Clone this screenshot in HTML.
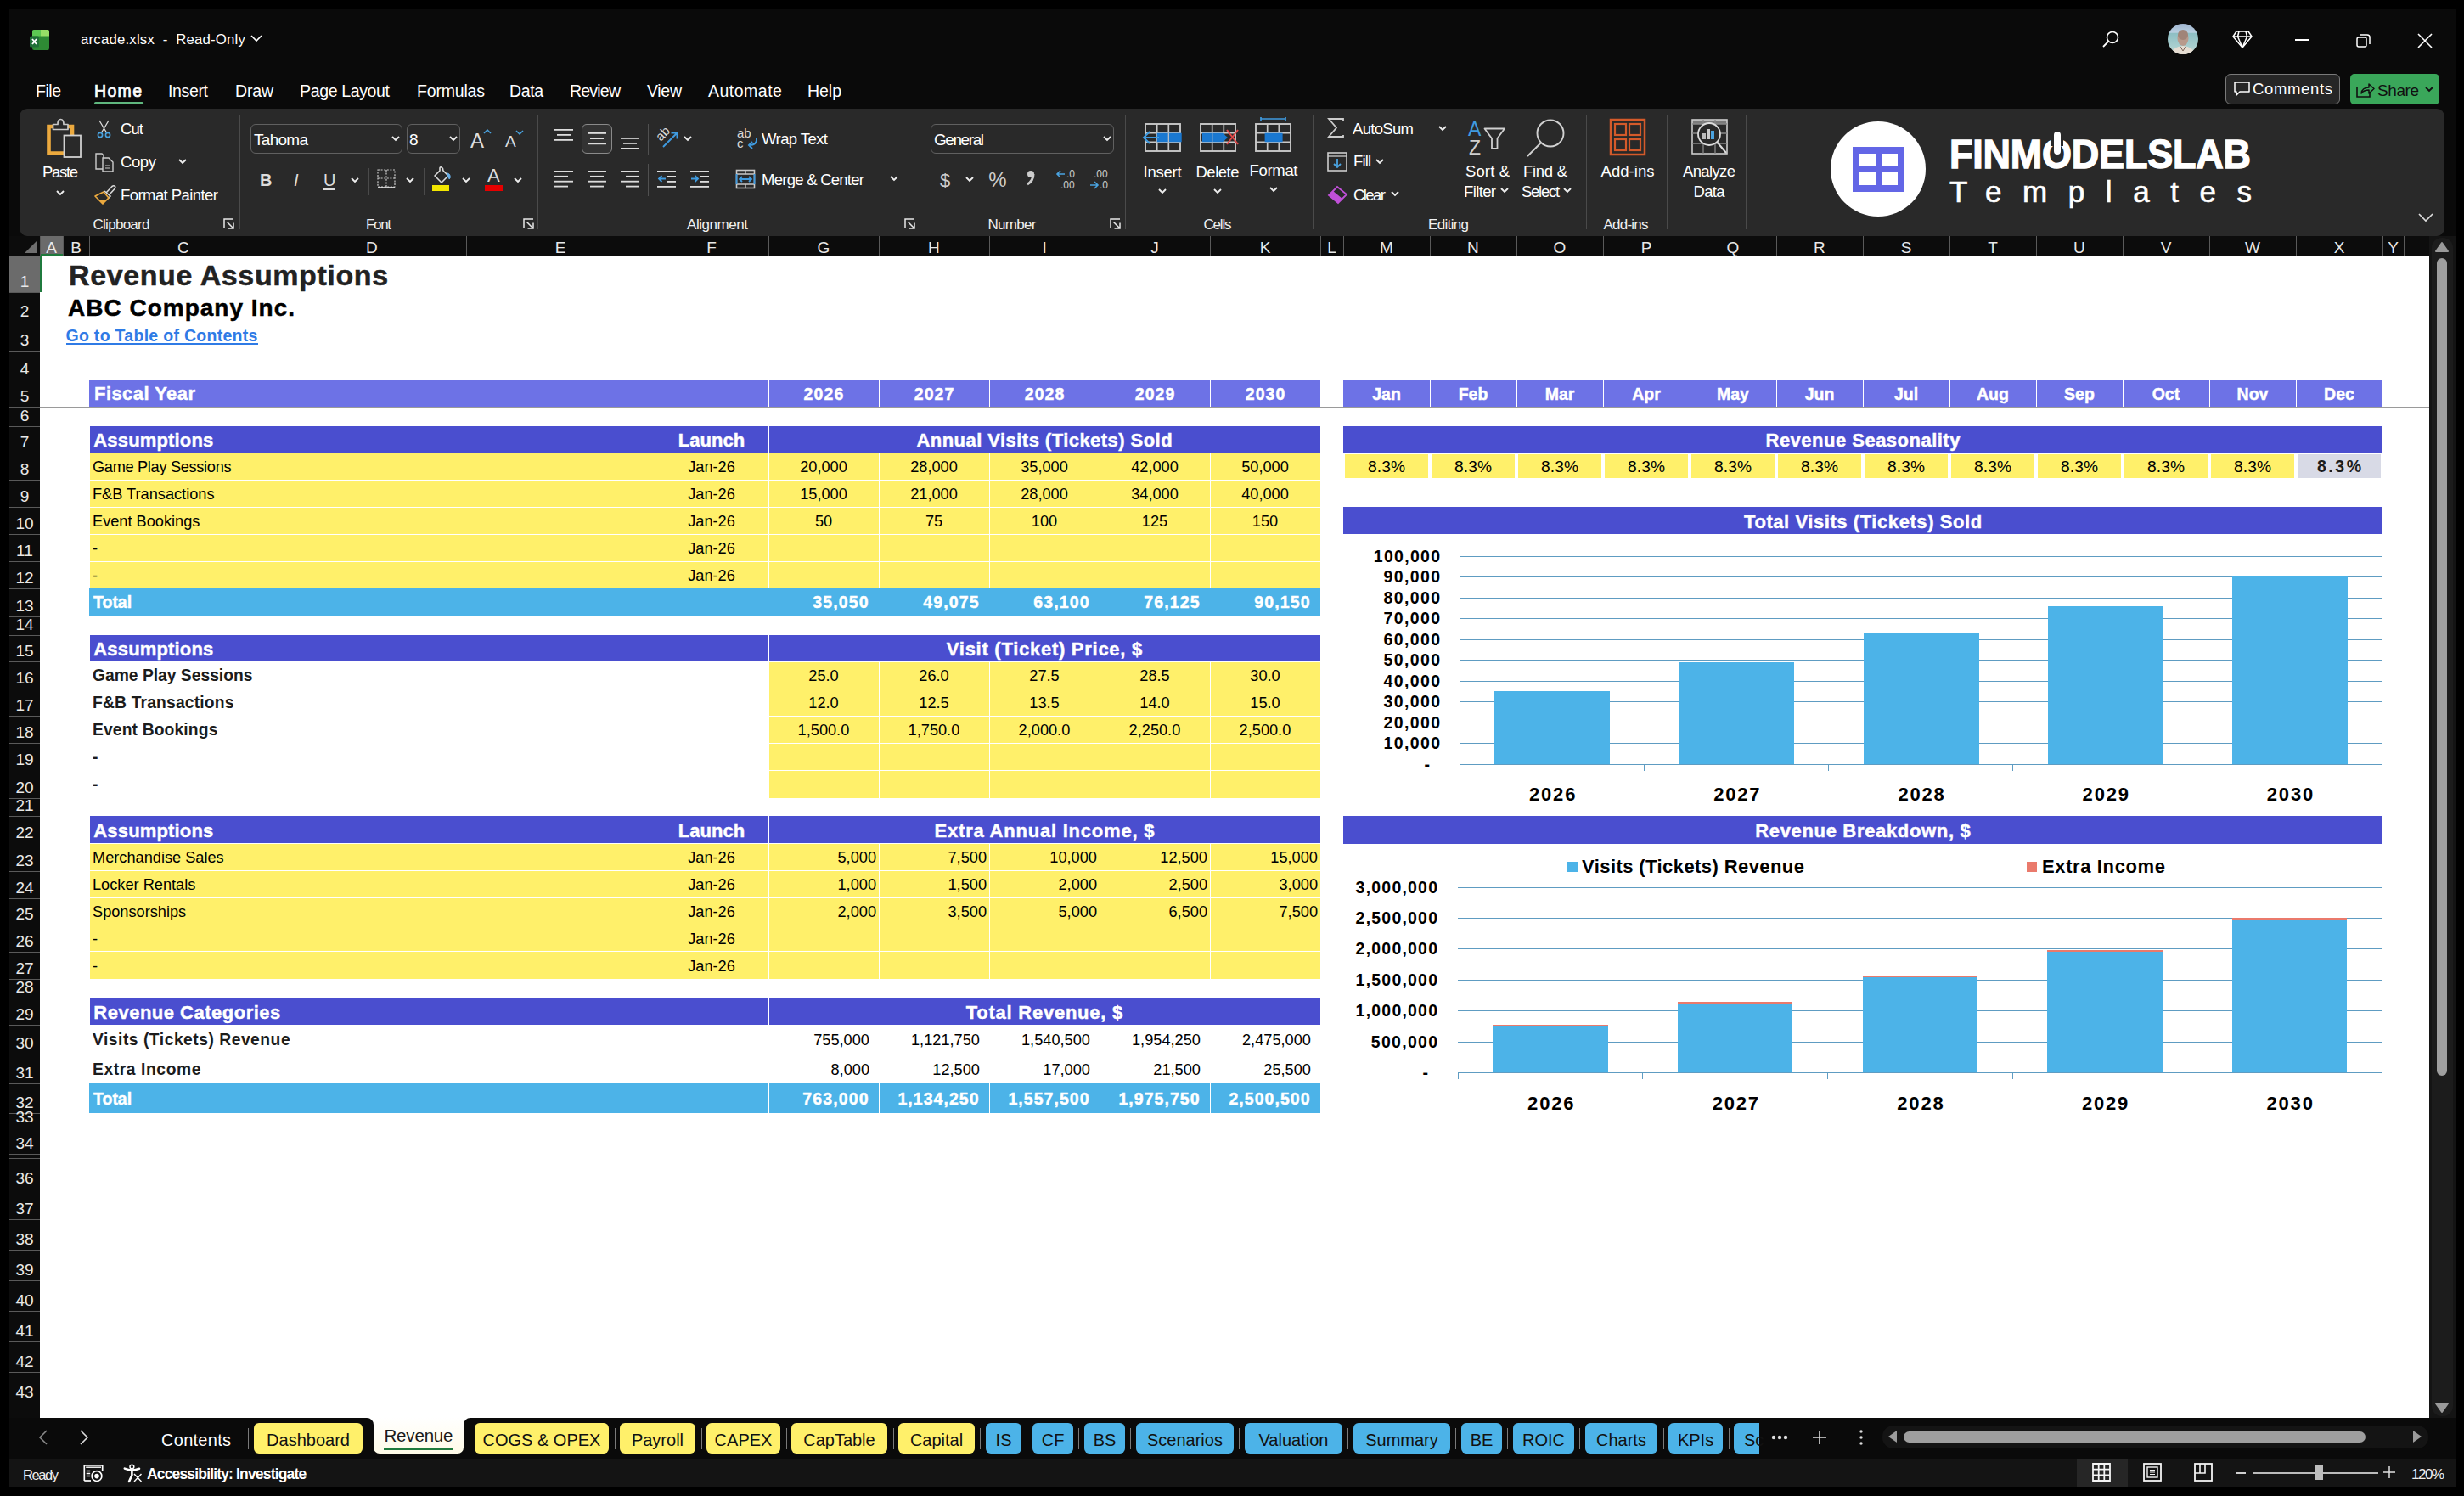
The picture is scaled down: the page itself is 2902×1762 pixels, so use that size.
<!DOCTYPE html>
<html><head><meta charset="utf-8"><style>
html,body{margin:0;padding:0;background:#000;width:2902px;height:1762px;overflow:hidden;}
body{position:relative;font-family:"Liberation Sans",sans-serif;}
.t{position:absolute;white-space:pre;line-height:1;}
.r{position:absolute;box-sizing:border-box;}
.s{position:absolute;overflow:visible;}
</style></head><body>
<div class="r" style="left:11.0px;top:11.0px;width:2881.0px;height:1740.0px;background:#0a0a0a;"></div>
<svg class="s" style="left:35px;top:35px" width="23" height="24" viewBox="0 0 23 24">
<rect x="3" y="0" width="20" height="24" rx="2.2" fill="#2e8a34"/>
<path d="M3 2.2 Q3 0 5.2 0 H13 V7.5 H3 Z" fill="#5cc752"/>
<path d="M13 0 H20.8 Q23 0 23 2.2 V7.5 H13 Z" fill="#97df66"/>
<rect x="0" y="7.5" width="11" height="13" rx="1.6" fill="#1f6f36"/>
<path d="M3 11 L8 17 M8 11 L3 17" stroke="#fff" stroke-width="1.9"/>
</svg>
<div class="t" style="left:95.0px;top:39.3px;font-size:16.8px;color:#fff;letter-spacing:0.19px;">arcade.xlsx  -  Read-Only</div>
<svg class="s" style="left:295px;top:40px" width="14" height="10" viewBox="0 0 14 10"><path d="M1 2 L7 8 L13 2" stroke="#fff" stroke-width="1.6" fill="none"/></svg>
<svg class="s" style="left:2474px;top:34px" width="24" height="24" viewBox="0 0 24 24"><circle cx="14" cy="10" r="6.5" stroke="#fff" stroke-width="1.6" fill="none"/><path d="M9.5 14.5 L3 21" stroke="#fff" stroke-width="1.8"/></svg>
<svg class="s" style="left:2553px;top:28px" width="36" height="36" viewBox="0 0 36 36"><defs><clipPath id="av"><circle cx="18" cy="18" r="18"/></clipPath>
<linearGradient id="avg" x1="0" y1="0" x2="0" y2="1"><stop offset="0" stop-color="#9fb4cf"/><stop offset=".28" stop-color="#b9cfe0"/><stop offset=".32" stop-color="#8ebfc4"/><stop offset=".75" stop-color="#a9cfcf"/><stop offset="1" stop-color="#d9dcd8"/></linearGradient></defs>
<g clip-path="url(#av)"><rect width="36" height="36" fill="url(#avg)"/>
<ellipse cx="18" cy="17" rx="6.5" ry="9" fill="#b89a8c"/><ellipse cx="18" cy="13" rx="6" ry="6" fill="#a08478"/>
<path d="M4 36 Q6 27 18 26 Q30 27 32 36 Z" fill="#e6ddd2"/><path d="M15 27 L18 32 L21 27" stroke="#7a6458" stroke-width="1" fill="none"/></g></svg>
<svg class="s" style="left:2628px;top:34px" width="26" height="24" viewBox="0 0 26 24"><path d="M6 3 H20 L24 9 L13 22 L2 9 Z M2 9 H24 M9 3 L7.5 9 L13 22 L18.5 9 L17 3" stroke="#fff" stroke-width="1.5" fill="none" stroke-linejoin="round"/></svg>
<div class="r" style="left:2703.0px;top:46.0px;width:16.0px;height:2.0px;background:#fff;"></div>
<svg class="s" style="left:2774px;top:38px" width="20" height="20" viewBox="0 0 20 20"><rect x="2" y="6" width="11" height="11" rx="2" stroke="#fff" stroke-width="1.5" fill="none"/><path d="M6 3 H14 Q17 3 17 6 V14" stroke="#fff" stroke-width="1.5" fill="none"/></svg>
<svg class="s" style="left:2846px;top:38px" width="20" height="20" viewBox="0 0 20 20"><path d="M2 2 L18 18 M18 2 L2 18" stroke="#fff" stroke-width="1.6"/></svg>
<div class="t" style="left:42.0px;top:97.5px;font-size:19.5px;color:#fff;letter-spacing:-0.47px;">File</div>
<div class="t" style="left:111.0px;top:97.5px;font-size:19.5px;color:#fff;letter-spacing:1.33px;-webkit-text-stroke:0.7px #fff;">Home</div>
<div class="t" style="left:198.0px;top:97.5px;font-size:19.5px;color:#fff;letter-spacing:-0.35px;">Insert</div>
<div class="t" style="left:277.0px;top:97.5px;font-size:19.5px;color:#fff;letter-spacing:-0.17px;">Draw</div>
<div class="t" style="left:353.0px;top:97.5px;font-size:19.5px;color:#fff;letter-spacing:-0.35px;">Page Layout</div>
<div class="t" style="left:491.0px;top:97.5px;font-size:19.5px;color:#fff;letter-spacing:-0.18px;">Formulas</div>
<div class="t" style="left:600.0px;top:97.5px;font-size:19.5px;color:#fff;letter-spacing:-0.40px;">Data</div>
<div class="t" style="left:671.0px;top:97.5px;font-size:19.5px;color:#fff;letter-spacing:-0.79px;">Review</div>
<div class="t" style="left:762.0px;top:97.5px;font-size:19.5px;color:#fff;letter-spacing:-0.31px;">View</div>
<div class="t" style="left:834.0px;top:97.5px;font-size:19.5px;color:#fff;letter-spacing:0.50px;">Automate</div>
<div class="t" style="left:951.0px;top:97.5px;font-size:19.5px;color:#fff;letter-spacing:-0.04px;">Help</div>
<div class="r" style="left:111px;top:119.5px;width:58px;height:3.5px;border-radius:2px;background:#5fb77e"></div>
<div class="r" style="left:2621px;top:87px;width:135px;height:36px;border:1.5px solid #7a7a7a;border-radius:6px;background:#262626"></div>
<svg class="s" style="left:2630px;top:95px" width="22" height="20" viewBox="0 0 22 20"><path d="M2 2 H19 V13 H8 L4 17 V13 H2 Z" stroke="#fff" stroke-width="1.5" fill="none" stroke-linejoin="round"/></svg>
<div class="t" style="left:2653.0px;top:96.3px;font-size:18.5px;color:#fff;letter-spacing:0.65px;">Comments</div>
<div class="r" style="left:2768px;top:87px;width:105px;height:36px;border-radius:5px;background:#3aa75a"></div>
<svg class="s" style="left:2774px;top:95px" width="24" height="22" viewBox="0 0 24 22"><path d="M2 8 V19 H17 V14" stroke="#111" stroke-width="1.6" fill="none"/><path d="M7 15 Q8 8 16 8 V4 L22 9.5 L16 15 V11 Q10 11 7 15 Z" stroke="#111" stroke-width="1.5" fill="none" stroke-linejoin="round"/></svg>
<div class="t" style="left:2800.0px;top:96.9px;font-size:19px;color:#111;letter-spacing:-0.43px;">Share</div>
<svg class="s" style="left:2855px;top:101px" width="12" height="8" viewBox="0 0 12 8"><path d="M2 2 L6 6 L10 2" stroke="#111" stroke-width="1.9" fill="none"/></svg>
<div class="r" style="left:23px;top:128px;width:2856px;height:150px;border-radius:9px;background:#292929"></div>
<div class="r" style="left:282.0px;top:136.0px;width:1.0px;height:134.0px;background:#4a4a4a;"></div>
<div class="r" style="left:633.0px;top:136.0px;width:1.0px;height:134.0px;background:#4a4a4a;"></div>
<div class="r" style="left:1083.0px;top:136.0px;width:1.0px;height:134.0px;background:#4a4a4a;"></div>
<div class="r" style="left:1325.0px;top:136.0px;width:1.0px;height:134.0px;background:#4a4a4a;"></div>
<div class="r" style="left:1546.0px;top:136.0px;width:1.0px;height:134.0px;background:#4a4a4a;"></div>
<div class="r" style="left:1868.0px;top:136.0px;width:1.0px;height:134.0px;background:#4a4a4a;"></div>
<div class="r" style="left:1963.0px;top:136.0px;width:1.0px;height:134.0px;background:#4a4a4a;"></div>
<div class="r" style="left:2056.0px;top:136.0px;width:1.0px;height:134.0px;background:#4a4a4a;"></div>
<div class="t" style="left:109.5px;top:255.6px;font-size:17px;color:#f0f0f0;letter-spacing:-0.72px;">Clipboard</div>
<div class="t" style="left:431.0px;top:255.6px;font-size:17px;color:#f0f0f0;letter-spacing:-1.34px;">Font</div>
<div class="t" style="left:809.0px;top:255.6px;font-size:17px;color:#f0f0f0;letter-spacing:-0.45px;">Alignment</div>
<div class="t" style="left:1163.5px;top:255.6px;font-size:17px;color:#f0f0f0;letter-spacing:-0.69px;">Number</div>
<div class="t" style="left:1417.5px;top:255.6px;font-size:17px;color:#f0f0f0;letter-spacing:-1.20px;">Cells</div>
<div class="t" style="left:1682.0px;top:255.6px;font-size:17px;color:#f0f0f0;letter-spacing:-0.66px;">Editing</div>
<div class="t" style="left:1888.5px;top:255.6px;font-size:17px;color:#f0f0f0;letter-spacing:-0.77px;">Add-ins</div>
<svg class="s" style="left:263px;top:257px" width="14" height="14" viewBox="0 0 14 14"><path d="M1 12 V1 H12" stroke="#e8e8e8" stroke-width="1.5" fill="none"/><path d="M4.5 4.5 L11.5 11.5 M12 5.5 V12 H5.5" stroke="#e8e8e8" stroke-width="1.5" fill="none"/></svg>
<svg class="s" style="left:616px;top:257px" width="14" height="14" viewBox="0 0 14 14"><path d="M1 12 V1 H12" stroke="#e8e8e8" stroke-width="1.5" fill="none"/><path d="M4.5 4.5 L11.5 11.5 M12 5.5 V12 H5.5" stroke="#e8e8e8" stroke-width="1.5" fill="none"/></svg>
<svg class="s" style="left:1065px;top:257px" width="14" height="14" viewBox="0 0 14 14"><path d="M1 12 V1 H12" stroke="#e8e8e8" stroke-width="1.5" fill="none"/><path d="M4.5 4.5 L11.5 11.5 M12 5.5 V12 H5.5" stroke="#e8e8e8" stroke-width="1.5" fill="none"/></svg>
<svg class="s" style="left:1307px;top:257px" width="14" height="14" viewBox="0 0 14 14"><path d="M1 12 V1 H12" stroke="#e8e8e8" stroke-width="1.5" fill="none"/><path d="M4.5 4.5 L11.5 11.5 M12 5.5 V12 H5.5" stroke="#e8e8e8" stroke-width="1.5" fill="none"/></svg>
<svg class="s" style="left:50px;top:135px" width="52" height="56" viewBox="0 0 52 56">
<path d="M25 45.5 H7.5 V14 H35 V24" stroke="#eba93e" stroke-width="4.6" fill="none"/>
<path d="M12.5 17.5 V11.5 H18 Q18 5.5 21.5 5.5 Q25 5.5 25 11.5 H30 V17.5 Z" stroke="#c8c8c8" stroke-width="1.7" fill="#292929" stroke-linejoin="round"/>
<rect x="25.5" y="24.5" width="19.5" height="25.5" stroke="#d0d0d0" stroke-width="1.8" fill="#292929"/>
</svg>
<div class="t" style="left:50.0px;top:194.3px;font-size:18.5px;color:#fff;letter-spacing:-1.33px;">Paste</div>
<svg class="s" style="left:65px;top:223px" width="12" height="8" viewBox="0 0 12 8"><path d="M2 2 L6 6 L10 2" stroke="#eee" stroke-width="1.9" fill="none"/></svg>
<svg class="s" style="left:112px;top:141px" width="22" height="22" viewBox="0 0 22 22"><path d="M5 1 L14 16 M16 1 L7 16" stroke="#ddd" stroke-width="1.3"/><circle cx="6" cy="18" r="2.6" stroke="#4aa3e0" stroke-width="1.6" fill="none"/><circle cx="15" cy="18" r="2.6" stroke="#4aa3e0" stroke-width="1.6" fill="none"/></svg>
<div class="t" style="left:142.0px;top:143.3px;font-size:18.5px;color:#fff;letter-spacing:-0.89px;">Cut</div>
<svg class="s" style="left:111px;top:179px" width="26" height="24" viewBox="0 0 26 24"><path d="M2 2 H9 L11 4 V20 H2 Z" stroke="#ccc" stroke-width="1.4" fill="none"/><path d="M10 7 H17 L22 12 V23 H10 Z" stroke="#ccc" stroke-width="1.4" fill="#292929"/><path d="M13 16 H19 M13 19 H19" stroke="#ccc" stroke-width="1.2"/></svg>
<div class="t" style="left:142.0px;top:182.3px;font-size:18.5px;color:#fff;letter-spacing:-0.40px;">Copy</div>
<svg class="s" style="left:209px;top:186px" width="12" height="8" viewBox="0 0 12 8"><path d="M2 2 L6 6 L10 2" stroke="#eee" stroke-width="1.9" fill="none"/></svg>
<svg class="s" style="left:110px;top:216px" width="28" height="26" viewBox="0 0 28 26"><path d="M15 11 L22 3.5 Q24 2 25.5 3.5 Q26.5 5 25 6.5 L18 14" stroke="#d8d8d8" stroke-width="1.6" fill="none"/><path d="M13 9 L20 15 L17 18" stroke="#d8d8d8" stroke-width="1.6" fill="none"/><path d="M2 15 L12 10 L18 17 L11 24 Z" stroke="#eba93e" stroke-width="1.7" fill="#292929" stroke-linejoin="round"/><path d="M6 19 L15 19.5 L11 24 Z" fill="#eba93e"/></svg>
<div class="t" style="left:142.0px;top:221.3px;font-size:18.5px;color:#fff;letter-spacing:-0.57px;">Format Painter</div>
<div class="r" style="left:295px;top:146px;width:179px;height:35px;border:1px solid #606060;border-radius:6px;background:#292929"></div>
<div class="t" style="left:299.0px;top:154.9px;font-size:19px;color:#fff;letter-spacing:-0.72px;">Tahoma</div>
<svg class="s" style="left:460px;top:159px" width="12" height="8" viewBox="0 0 12 8"><path d="M2 2 L6 6 L10 2" stroke="#eee" stroke-width="1.9" fill="none"/></svg>
<div class="r" style="left:479px;top:146px;width:63px;height:35px;border:1px solid #606060;border-radius:6px;background:#292929"></div>
<div class="t" style="left:482.0px;top:154.9px;font-size:19px;color:#fff;">8</div>
<svg class="s" style="left:528px;top:159px" width="12" height="8" viewBox="0 0 12 8"><path d="M2 2 L6 6 L10 2" stroke="#eee" stroke-width="1.9" fill="none"/></svg>
<div class="t" style="left:554.0px;top:153.7px;font-size:24px;color:#ddd;">A</div>
<svg class="s" style="left:569px;top:151px" width="10" height="7" viewBox="0 0 10 7"><path d="M1 6 L5 2 L9 6" stroke="#4aa3e0" stroke-width="1.5" fill="none"/></svg>
<div class="t" style="left:595.0px;top:156.9px;font-size:19px;color:#ddd;">A</div>
<svg class="s" style="left:607px;top:153px" width="10" height="7" viewBox="0 0 10 7"><path d="M1 1 L5 5 L9 1" stroke="#4aa3e0" stroke-width="1.5" fill="none"/></svg>
<div class="t" style="left:306.0px;top:202.1px;font-size:20px;color:#ddd;font-weight:bold;">B</div>
<div class="t" style="left:346.0px;top:202.1px;font-size:20px;color:#ddd;font-style:italic;">I</div>
<div class="t" style="left:381.0px;top:202.1px;font-size:20px;color:#ddd;">U</div>
<div class="r" style="left:381.0px;top:222.0px;width:14.0px;height:2.0px;background:#ddd;"></div>
<svg class="s" style="left:412px;top:208px" width="12" height="8" viewBox="0 0 12 8"><path d="M2 2 L6 6 L10 2" stroke="#eee" stroke-width="1.9" fill="none"/></svg>
<div class="r" style="left:434.0px;top:198.0px;width:1.0px;height:32.0px;background:#4a4a4a;"></div>
<svg class="s" style="left:443px;top:198px" width="26" height="26" viewBox="0 0 26 26"><path d="M2 2 H22 V22 H2 Z M12 2 V22 M2 12 H22" stroke="#ccc" stroke-width="1.2" stroke-dasharray="2 1.6" fill="none"/><path d="M2 23 H22" stroke="#eee" stroke-width="1.6"/></svg>
<svg class="s" style="left:477px;top:208px" width="12" height="8" viewBox="0 0 12 8"><path d="M2 2 L6 6 L10 2" stroke="#eee" stroke-width="1.9" fill="none"/></svg>
<div class="r" style="left:499.0px;top:198.0px;width:1.0px;height:32.0px;background:#4a4a4a;"></div>
<svg class="s" style="left:506px;top:196px" width="30" height="24" viewBox="0 0 30 24"><path d="M12 5 V2 Q12 0.5 14 1 Q16 2 16 5 L22 11 L14 19 L6 11 Z" stroke="#ddd" stroke-width="1.6" fill="none" stroke-linejoin="round"/><path d="M21 8 Q25 9 24 14 Q23 16 22 13 Z" fill="#6ab0e8" stroke="#6ab0e8" stroke-width="1"/></svg>
<div class="r" style="left:509.0px;top:218.0px;width:20.0px;height:7.0px;background:#f2e600;"></div>
<svg class="s" style="left:543px;top:208px" width="12" height="8" viewBox="0 0 12 8"><path d="M2 2 L6 6 L10 2" stroke="#eee" stroke-width="1.9" fill="none"/></svg>
<div class="t" style="left:574.0px;top:196.4px;font-size:22px;color:#ddd;">A</div>
<div class="r" style="left:571.0px;top:218.0px;width:21.0px;height:7.0px;background:#e60000;"></div>
<svg class="s" style="left:604px;top:208px" width="12" height="8" viewBox="0 0 12 8"><path d="M2 2 L6 6 L10 2" stroke="#eee" stroke-width="1.9" fill="none"/></svg>
<svg class="s" style="left:653px;top:152px" width="22" height="18" viewBox="0 0 22 18"><rect x="0.0" y="0" width="22" height="1.8" fill="#ddd"/><rect x="3.0" y="6" width="16" height="1.8" fill="#ddd"/><rect x="0.0" y="12" width="22" height="1.8" fill="#ddd"/></svg>
<div class="r" style="left:685px;top:146px;width:36px;height:35px;border:1.5px solid #8a8a8a;border-radius:6px;background:#333"></div>
<svg class="s" style="left:692px;top:156px" width="22" height="18.6" viewBox="0 0 22 18.6"><rect x="0.0" y="0.0" width="22" height="1.8" fill="#ddd"/><rect x="3.0" y="6.2" width="16" height="1.8" fill="#ddd"/><rect x="0.0" y="12.4" width="22" height="1.8" fill="#ddd"/></svg>
<svg class="s" style="left:731px;top:162px" width="22" height="18" viewBox="0 0 22 18"><rect x="0.0" y="0" width="22" height="1.8" fill="#ddd"/><rect x="3.0" y="6" width="16" height="1.8" fill="#ddd"/><rect x="0.0" y="12" width="22" height="1.8" fill="#ddd"/></svg>
<div class="r" style="left:763.0px;top:146.0px;width:1.0px;height:36.0px;background:#505050;"></div>
<svg class="s" style="left:772px;top:144px" width="32" height="32" viewBox="0 0 32 32"><text x="0" y="18" font-size="15" fill="#d8d8d8" font-family="Liberation Sans" transform="rotate(-45 9 13)">ab</text><path d="M9 29 L25 13 M18.5 12.5 H25.5 V19.5" stroke="#3f9be0" stroke-width="1.9" fill="none"/></svg>
<svg class="s" style="left:804px;top:159px" width="12" height="8" viewBox="0 0 12 8"><path d="M2 2 L6 6 L10 2" stroke="#eee" stroke-width="1.9" fill="none"/></svg>
<svg class="s" style="left:653px;top:201px" width="22" height="23.6" viewBox="0 0 22 23.6"><rect x="0" y="0.0" width="22" height="1.8" fill="#ddd"/><rect x="0" y="5.9" width="16" height="1.8" fill="#ddd"/><rect x="0" y="11.8" width="22" height="1.8" fill="#ddd"/><rect x="0" y="17.700000000000003" width="16" height="1.8" fill="#ddd"/></svg>
<svg class="s" style="left:692px;top:201px" width="22" height="23.6" viewBox="0 0 22 23.6"><rect x="0.0" y="0.0" width="22" height="1.8" fill="#ddd"/><rect x="3.0" y="5.9" width="16" height="1.8" fill="#ddd"/><rect x="0.0" y="11.8" width="22" height="1.8" fill="#ddd"/><rect x="3.0" y="17.700000000000003" width="16" height="1.8" fill="#ddd"/></svg>
<svg class="s" style="left:731px;top:201px" width="22" height="23.6" viewBox="0 0 22 23.6"><rect x="0" y="0.0" width="22" height="1.8" fill="#ddd"/><rect x="6" y="5.9" width="16" height="1.8" fill="#ddd"/><rect x="0" y="11.8" width="22" height="1.8" fill="#ddd"/><rect x="6" y="17.700000000000003" width="16" height="1.8" fill="#ddd"/></svg>
<div class="r" style="left:763.0px;top:193.0px;width:1.0px;height:38.0px;background:#505050;"></div>
<svg class="s" style="left:774px;top:201px" width="24" height="24" viewBox="0 0 24 24"><rect x="0" y="0" width="22" height="1.8" fill="#ddd"/><rect x="12" y="6" width="10" height="1.8" fill="#ddd"/><rect x="12" y="12" width="10" height="1.8" fill="#ddd"/><rect x="0" y="18" width="22" height="1.8" fill="#ddd"/><path d="M10 9.5 H2 M5.5 6 L2 9.5 L5.5 13" stroke="#3f9be0" stroke-width="1.8" fill="none"/></svg>
<svg class="s" style="left:813px;top:201px" width="24" height="24" viewBox="0 0 24 24"><rect x="0" y="0" width="22" height="1.8" fill="#ddd"/><rect x="12" y="6" width="10" height="1.8" fill="#ddd"/><rect x="12" y="12" width="10" height="1.8" fill="#ddd"/><rect x="0" y="18" width="22" height="1.8" fill="#ddd"/><path d="M1 9.5 H9 M5.5 6 L9 9.5 L5.5 13" stroke="#3f9be0" stroke-width="1.8" fill="none"/></svg>
<div class="r" style="left:851.0px;top:144.0px;width:1.0px;height:94.0px;background:#505050;"></div>
<svg class="s" style="left:868px;top:148px" width="26" height="30" viewBox="0 0 26 30"><text x="0" y="14" font-size="15" fill="#d8d8d8" font-family="Liberation Sans">ab</text><text x="0" y="26" font-size="15" fill="#d8d8d8" font-family="Liberation Sans">c</text><path d="M23 15 Q24 23 14 23 M18 19 L14 23 L18 27" stroke="#3f9be0" stroke-width="1.9" fill="none"/></svg>
<div class="t" style="left:897.0px;top:155.3px;font-size:18.5px;color:#fff;letter-spacing:-0.58px;">Wrap Text</div>
<svg class="s" style="left:866px;top:199px" width="26" height="25" viewBox="0 0 26 25"><rect x="1.5" y="1.5" width="21" height="21" stroke="#c8c8c8" stroke-width="1.6" fill="none"/><path d="M1.5 6 H22.5 M1.5 18 H22.5 M12 1.5 V6 M12 18 V22.5" stroke="#c8c8c8" stroke-width="1.4"/><path d="M1.5 6 V18 M22.5 6 V18" stroke="#3f9be0" stroke-width="1.8"/><path d="M5 12 H19 M8 9 L5 12 L8 15 M16 9 L19 12 L16 15" stroke="#3f9be0" stroke-width="1.8" fill="none"/></svg>
<div class="t" style="left:897.0px;top:203.3px;font-size:18.5px;color:#fff;letter-spacing:-0.74px;">Merge &amp; Center</div>
<svg class="s" style="left:1047px;top:206px" width="12" height="8" viewBox="0 0 12 8"><path d="M2 2 L6 6 L10 2" stroke="#eee" stroke-width="1.9" fill="none"/></svg>
<div class="r" style="left:1096px;top:146px;width:216px;height:35px;border:1px solid #606060;border-radius:6px;background:#292929"></div>
<div class="t" style="left:1100.0px;top:154.9px;font-size:19px;color:#fff;letter-spacing:-1.43px;">General</div>
<svg class="s" style="left:1298px;top:159px" width="12" height="8" viewBox="0 0 12 8"><path d="M2 2 L6 6 L10 2" stroke="#eee" stroke-width="1.9" fill="none"/></svg>
<div class="t" style="left:1106.9px;top:202.4px;font-size:22px;color:#ccc;">$</div>
<svg class="s" style="left:1136px;top:207px" width="12" height="8" viewBox="0 0 12 8"><path d="M2 2 L6 6 L10 2" stroke="#eee" stroke-width="1.9" fill="none"/></svg>
<div class="t" style="left:1164.3px;top:199.7px;font-size:24px;color:#ccc;">%</div>
<svg class="s" style="left:1206px;top:199px" width="14" height="22" viewBox="0 0 14 22"><circle cx="8" cy="6" r="4" fill="#ccc"/><path d="M11 6 Q11 14 4 18" stroke="#ccc" stroke-width="3" fill="none"/></svg>
<div class="r" style="left:1235.0px;top:195.0px;width:1.0px;height:35.0px;background:#4a4a4a;"></div>
<svg class="s" style="left:1244px;top:197px" width="30" height="28" viewBox="0 0 30 28"><path d="M1 8 H10 M5 4 L1 8 L5 12" stroke="#4aa3e0" stroke-width="1.6" fill="none"/><text x="12" y="12" font-size="12" fill="#ccc" font-family="Liberation Sans">.0</text><text x="5" y="25" font-size="12" fill="#ccc" font-family="Liberation Sans">.00</text></svg>
<svg class="s" style="left:1283px;top:197px" width="30" height="28" viewBox="0 0 30 28"><text x="5" y="12" font-size="12" fill="#ccc" font-family="Liberation Sans">.00</text><path d="M1 21 H10 M6 17 L10 21 L6 25" stroke="#4aa3e0" stroke-width="1.6" fill="none"/><text x="12" y="25" font-size="12" fill="#ccc" font-family="Liberation Sans">.0</text></svg>
<svg class="s" style="left:1345px;top:138px" width="50" height="44" viewBox="0 0 50 44"><rect x="4" y="8" width="41" height="32" stroke="#c8c8c8" stroke-width="1.9" fill="none"/><path d="M4 18.7 H45 M4 29.3 H45 M17.7 8 V40 M31.3 8 V40" stroke="#c8c8c8" stroke-width="1.7"/><rect x="17.7" y="18.7" width="29" height="10.6" fill="#1a78d0"/><path d="M31.3 18.7 V29.3" stroke="#c8c8c8" stroke-width="1.2"/><path d="M20 24 H2 M9 17 L2 24 L9 31" stroke="#3f9be0" stroke-width="2" fill="none"/></svg>
<div class="t" style="left:1346.5px;top:194.3px;font-size:18.5px;color:#fff;letter-spacing:-0.25px;">Insert</div>
<svg class="s" style="left:1363px;top:221px" width="12" height="8" viewBox="0 0 12 8"><path d="M2 2 L6 6 L10 2" stroke="#eee" stroke-width="1.9" fill="none"/></svg>
<svg class="s" style="left:1410px;top:138px" width="50" height="44" viewBox="0 0 50 44"><rect x="4" y="8" width="41" height="32" stroke="#c8c8c8" stroke-width="1.9" fill="none"/><path d="M4 18.7 H45 M4 29.3 H45 M17.7 8 V40 M31.3 8 V40" stroke="#c8c8c8" stroke-width="1.7"/><rect x="6" y="18.7" width="24" height="10.6" fill="#1a78d0"/><path d="M30 18.7 L36 24 L30 29.3 Z" fill="#1a78d0"/><path d="M17.7 18.7 V29.3" stroke="#c8c8c8" stroke-width="1.2"/><path d="M35 15 L48 32 M48 15 L35 32" stroke="#e04848" stroke-width="2"/></svg>
<div class="t" style="left:1408.5px;top:194.3px;font-size:18.5px;color:#fff;letter-spacing:-0.50px;">Delete</div>
<svg class="s" style="left:1428px;top:221px" width="12" height="8" viewBox="0 0 12 8"><path d="M2 2 L6 6 L10 2" stroke="#eee" stroke-width="1.9" fill="none"/></svg>
<svg class="s" style="left:1475px;top:138px" width="50" height="44" viewBox="0 0 50 44"><rect x="4" y="8" width="41" height="32" stroke="#c8c8c8" stroke-width="1.9" fill="none"/><path d="M4 18.7 H45 M4 29.3 H45 M17.7 8 V40 M31.3 8 V40" stroke="#c8c8c8" stroke-width="1.7"/><rect x="14.6" y="18.7" width="21" height="10.6" fill="#1a78d0"/><path d="M10 2 H39 M10 0 V4 M39 0 V4" stroke="#3f9be0" stroke-width="1.7"/></svg>
<div class="t" style="left:1471.5px;top:192.3px;font-size:18.5px;color:#fff;letter-spacing:-0.32px;">Format</div>
<svg class="s" style="left:1494px;top:219px" width="12" height="8" viewBox="0 0 12 8"><path d="M2 2 L6 6 L10 2" stroke="#eee" stroke-width="1.9" fill="none"/></svg>
<svg class="s" style="left:1563px;top:139px" width="22" height="24" viewBox="0 0 22 24"><path d="M19 3 V1 H2 L11 11.5 L2 22 H19 V20" stroke="#ccc" stroke-width="1.8" fill="none"/></svg>
<div class="t" style="left:1593.0px;top:143.3px;font-size:18.5px;color:#fff;letter-spacing:-0.68px;">AutoSum</div>
<svg class="s" style="left:1693px;top:147px" width="12" height="8" viewBox="0 0 12 8"><path d="M2 2 L6 6 L10 2" stroke="#eee" stroke-width="1.9" fill="none"/></svg>
<svg class="s" style="left:1563px;top:179px" width="26" height="24" viewBox="0 0 26 24"><rect x="1" y="1" width="22" height="21" stroke="#ccc" stroke-width="1.6" fill="none"/><path d="M1 5 H23" stroke="#ccc" stroke-width="1.3"/><path d="M12 8 V18 M8 14 L12 18 L16 14" stroke="#4aa3e0" stroke-width="1.8" fill="none"/></svg>
<div class="t" style="left:1594.0px;top:181.3px;font-size:18.5px;color:#fff;letter-spacing:-0.88px;">Fill</div>
<svg class="s" style="left:1619px;top:186px" width="12" height="8" viewBox="0 0 12 8"><path d="M2 2 L6 6 L10 2" stroke="#eee" stroke-width="1.9" fill="none"/></svg>
<svg class="s" style="left:1563px;top:217px" width="26" height="24" viewBox="0 0 26 24"><path d="M2 13 L12 3 L23 12 L13 22 Z" stroke="#c050d8" stroke-width="1.8" fill="none"/><path d="M2 13 L7 8 L18 17 L13 22 Z" fill="#c050d8"/></svg>
<div class="t" style="left:1594.0px;top:221.3px;font-size:18.5px;color:#fff;letter-spacing:-1.55px;">Clear</div>
<svg class="s" style="left:1637px;top:224px" width="12" height="8" viewBox="0 0 12 8"><path d="M2 2 L6 6 L10 2" stroke="#eee" stroke-width="1.9" fill="none"/></svg>
<svg class="s" style="left:1726px;top:139px" width="50" height="46" viewBox="0 0 50 46"><text x="3" y="20.5" font-size="23" fill="#3f9be0" font-family="Liberation Sans">A</text><text x="4" y="42.7" font-size="23" fill="#d0d0d0" font-family="Liberation Sans">Z</text><path d="M22.5 12.5 H46 L37.5 24 V36 H31 V24 Z" stroke="#d0d0d0" stroke-width="1.8" fill="none" stroke-linejoin="round"/></svg>
<div class="t" style="left:1726.0px;top:193.3px;font-size:18.5px;color:#fff;letter-spacing:0.12px;">Sort &amp;</div>
<div class="t" style="left:1724.0px;top:217.3px;font-size:18.5px;color:#fff;letter-spacing:-0.62px;">Filter</div>
<svg class="s" style="left:1766px;top:220px" width="12" height="8" viewBox="0 0 12 8"><path d="M2 2 L6 6 L10 2" stroke="#eee" stroke-width="1.9" fill="none"/></svg>
<svg class="s" style="left:1795px;top:138px" width="50" height="48" viewBox="0 0 50 48"><circle cx="31" cy="19" r="15.5" stroke="#d0d0d0" stroke-width="1.9" fill="none"/><path d="M20 30 L4 46" stroke="#d0d0d0" stroke-width="1.9"/></svg>
<div class="t" style="left:1794.0px;top:193.3px;font-size:18.5px;color:#fff;letter-spacing:-0.29px;">Find &amp;</div>
<div class="t" style="left:1792.0px;top:217.3px;font-size:18.5px;color:#fff;letter-spacing:-1.28px;">Select</div>
<svg class="s" style="left:1840px;top:220px" width="12" height="8" viewBox="0 0 12 8"><path d="M2 2 L6 6 L10 2" stroke="#eee" stroke-width="1.9" fill="none"/></svg>
<svg class="s" style="left:1895px;top:139px" width="46" height="46" viewBox="0 0 46 46"><rect x="2" y="2" width="40" height="41" stroke="#d45a2a" stroke-width="2.5" fill="none"/><rect x="7" y="7" width="13" height="13" stroke="#d45a2a" stroke-width="2.2" fill="none"/><rect x="24" y="7" width="13" height="13" stroke="#d45a2a" stroke-width="2.2" fill="none"/><rect x="7" y="25" width="13" height="13" stroke="#d45a2a" stroke-width="2.2" fill="none"/><rect x="24" y="25" width="13" height="13" stroke="#d45a2a" stroke-width="2.2" fill="none"/></svg>
<div class="t" style="left:1885.5px;top:193.3px;font-size:18.5px;color:#fff;letter-spacing:0.05px;">Add-ins</div>
<svg class="s" style="left:1991px;top:139px" width="46" height="46" viewBox="0 0 46 46"><rect x="2" y="2" width="41" height="5" fill="#7a7a7a"/><rect x="2" y="2" width="41" height="40" stroke="#ccc" stroke-width="1.6" fill="none"/><path d="M2 7 H43 M2 18 H43 M2 30 H43 M15 2 V42 M29 2 V42" stroke="#888" stroke-width="1.3"/><circle cx="22" cy="19" r="13" stroke="#ddd" stroke-width="1.8" fill="#292929"/><path d="M31 28 L42 41" stroke="#ddd" stroke-width="2"/><rect x="14" y="18" width="4" height="7" fill="#bbb"/><rect x="19" y="13" width="4" height="12" fill="#ccc"/><rect x="24" y="15" width="4" height="10" fill="#4aa3e0"/></svg>
<div class="t" style="left:1982.0px;top:193.3px;font-size:18.5px;color:#fff;letter-spacing:-0.64px;">Analyze</div>
<div class="t" style="left:1994.5px;top:217.3px;font-size:18.5px;color:#fff;letter-spacing:-0.69px;">Data</div>
<div class="r" style="left:2156px;top:143px;width:112px;height:112px;border-radius:56px;background:#fff"></div>
<div class="r" style="left:2182.0px;top:173.0px;width:61.0px;height:53.0px;background:#6366e6;"></div>
<div class="r" style="left:2190.0px;top:181.0px;width:19.0px;height:15.0px;background:#fff;"></div>
<div class="r" style="left:2216.0px;top:181.0px;width:19.0px;height:15.0px;background:#fff;"></div>
<div class="r" style="left:2190.0px;top:203.0px;width:19.0px;height:15.0px;background:#fff;"></div>
<div class="r" style="left:2216.0px;top:203.0px;width:19.0px;height:15.0px;background:#fff;"></div>
<div class="t" style="left:2296.0px;top:159.9px;font-size:45px;color:#fff;font-weight:bold;letter-spacing:-0.23px;-webkit-text-stroke:1.3px #fff;transform:scaleY(1.08);transform-origin:0 84.65%;">FINMODELSLAB</div>
<div class="r" style="left:2416.0px;top:158.0px;width:14.0px;height:14.0px;background:#292929;"></div>
<div class="r" style="left:2418.6px;top:155px;width:8px;height:27px;border-radius:4px;background:#fff"></div>
<div class="t" style="left:2296.0px;top:208.4px;font-size:35px;color:#fff;letter-spacing:24.56px;-webkit-text-stroke:0.6px #fff;">Templates</div>
<svg class="s" style="left:2848px;top:250px" width="18" height="12" viewBox="0 0 18 12"><path d="M1 2 L9 10 L17 2" stroke="#ddd" stroke-width="1.6" fill="none"/></svg>
<div class="r" style="left:11.0px;top:278.0px;width:2850.0px;height:23.0px;background:#0c0c0c;"></div>
<div class="r" style="left:11.0px;top:301.0px;width:36.0px;height:1369.0px;background:#0c0c0c;"></div>
<svg class="s" style="left:28px;top:282px" width="17" height="17" viewBox="0 0 17 17"><path d="M16 1 V16 H1 Z" fill="#6f6f6f"/></svg>
<div class="r" style="left:47.0px;top:278.0px;width:27.0px;height:23.0px;background:#6b6b6b;"></div>
<div class="r" style="left:47.0px;top:299.0px;width:27.0px;height:2.0px;background:#1f7a3d;"></div>
<div class="r" style="left:74.0px;top:278.0px;width:1.0px;height:23.0px;background:#5a5a5a;"></div>
<div class="t" style="left:54.2px;top:281.9px;font-size:19px;color:#e8e8e8;">A</div>
<div class="r" style="left:105.0px;top:278.0px;width:1.0px;height:23.0px;background:#5a5a5a;"></div>
<div class="t" style="left:83.2px;top:281.9px;font-size:19px;color:#e8e8e8;">B</div>
<div class="r" style="left:327.0px;top:278.0px;width:1.0px;height:23.0px;background:#5a5a5a;"></div>
<div class="t" style="left:209.1px;top:281.9px;font-size:19px;color:#e8e8e8;">C</div>
<div class="r" style="left:549.0px;top:278.0px;width:1.0px;height:23.0px;background:#5a5a5a;"></div>
<div class="t" style="left:431.1px;top:281.9px;font-size:19px;color:#e8e8e8;">D</div>
<div class="r" style="left:771.0px;top:278.0px;width:1.0px;height:23.0px;background:#5a5a5a;"></div>
<div class="t" style="left:653.7px;top:281.9px;font-size:19px;color:#e8e8e8;">E</div>
<div class="r" style="left:905.0px;top:278.0px;width:1.0px;height:23.0px;background:#5a5a5a;"></div>
<div class="t" style="left:832.2px;top:281.9px;font-size:19px;color:#e8e8e8;">F</div>
<div class="r" style="left:1035.0px;top:278.0px;width:1.0px;height:23.0px;background:#5a5a5a;"></div>
<div class="t" style="left:962.6px;top:281.9px;font-size:19px;color:#e8e8e8;">G</div>
<div class="r" style="left:1165.0px;top:278.0px;width:1.0px;height:23.0px;background:#5a5a5a;"></div>
<div class="t" style="left:1093.1px;top:281.9px;font-size:19px;color:#e8e8e8;">H</div>
<div class="r" style="left:1295.0px;top:278.0px;width:1.0px;height:23.0px;background:#5a5a5a;"></div>
<div class="t" style="left:1227.4px;top:281.9px;font-size:19px;color:#e8e8e8;">I</div>
<div class="r" style="left:1425.0px;top:278.0px;width:1.0px;height:23.0px;background:#5a5a5a;"></div>
<div class="t" style="left:1355.2px;top:281.9px;font-size:19px;color:#e8e8e8;">J</div>
<div class="r" style="left:1555.0px;top:278.0px;width:1.0px;height:23.0px;background:#5a5a5a;"></div>
<div class="t" style="left:1483.7px;top:281.9px;font-size:19px;color:#e8e8e8;">K</div>
<div class="r" style="left:1582.0px;top:278.0px;width:1.0px;height:23.0px;background:#5a5a5a;"></div>
<div class="t" style="left:1563.2px;top:281.9px;font-size:19px;color:#e8e8e8;">L</div>
<div class="r" style="left:1684.0px;top:278.0px;width:1.0px;height:23.0px;background:#5a5a5a;"></div>
<div class="t" style="left:1625.1px;top:281.9px;font-size:19px;color:#e8e8e8;">M</div>
<div class="r" style="left:1786.0px;top:278.0px;width:1.0px;height:23.0px;background:#5a5a5a;"></div>
<div class="t" style="left:1728.1px;top:281.9px;font-size:19px;color:#e8e8e8;">N</div>
<div class="r" style="left:1888.0px;top:278.0px;width:1.0px;height:23.0px;background:#5a5a5a;"></div>
<div class="t" style="left:1829.6px;top:281.9px;font-size:19px;color:#e8e8e8;">O</div>
<div class="r" style="left:1990.0px;top:278.0px;width:1.0px;height:23.0px;background:#5a5a5a;"></div>
<div class="t" style="left:1932.7px;top:281.9px;font-size:19px;color:#e8e8e8;">P</div>
<div class="r" style="left:2092.0px;top:278.0px;width:1.0px;height:23.0px;background:#5a5a5a;"></div>
<div class="t" style="left:2033.6px;top:281.9px;font-size:19px;color:#e8e8e8;">Q</div>
<div class="r" style="left:2194.0px;top:278.0px;width:1.0px;height:23.0px;background:#5a5a5a;"></div>
<div class="t" style="left:2136.1px;top:281.9px;font-size:19px;color:#e8e8e8;">R</div>
<div class="r" style="left:2296.0px;top:278.0px;width:1.0px;height:23.0px;background:#5a5a5a;"></div>
<div class="t" style="left:2238.7px;top:281.9px;font-size:19px;color:#e8e8e8;">S</div>
<div class="r" style="left:2398.0px;top:278.0px;width:1.0px;height:23.0px;background:#5a5a5a;"></div>
<div class="t" style="left:2341.2px;top:281.9px;font-size:19px;color:#e8e8e8;">T</div>
<div class="r" style="left:2500.0px;top:278.0px;width:1.0px;height:23.0px;background:#5a5a5a;"></div>
<div class="t" style="left:2442.1px;top:281.9px;font-size:19px;color:#e8e8e8;">U</div>
<div class="r" style="left:2602.0px;top:278.0px;width:1.0px;height:23.0px;background:#5a5a5a;"></div>
<div class="t" style="left:2544.7px;top:281.9px;font-size:19px;color:#e8e8e8;">V</div>
<div class="r" style="left:2704.0px;top:278.0px;width:1.0px;height:23.0px;background:#5a5a5a;"></div>
<div class="t" style="left:2644.0px;top:281.9px;font-size:19px;color:#e8e8e8;">W</div>
<div class="r" style="left:2806.0px;top:278.0px;width:1.0px;height:23.0px;background:#5a5a5a;"></div>
<div class="t" style="left:2748.7px;top:281.9px;font-size:19px;color:#e8e8e8;">X</div>
<div class="r" style="left:2831.0px;top:278.0px;width:1.0px;height:23.0px;background:#5a5a5a;"></div>
<div class="t" style="left:2812.2px;top:281.9px;font-size:19px;color:#e8e8e8;">Y</div>
<div class="r" style="left:2861.0px;top:278.0px;width:1.0px;height:23.0px;background:#5a5a5a;"></div>
<div class="r" style="left:47.0px;top:278.0px;width:1.0px;height:23.0px;background:#5a5a5a;"></div>
<div class="r" style="left:11.0px;top:301.0px;width:36.0px;height:43.0px;background:#6b6b6b;"></div>
<div class="r" style="left:11.0px;top:344.0px;width:36.0px;height:1.0px;background:#5a5a5a;"></div>
<div class="t" style="left:23.7px;top:321.9px;font-size:19px;color:#e8e8e8;">1</div>
<div class="r" style="left:11.0px;top:380.0px;width:36.0px;height:0.0px;background:#5a5a5a;"></div>
<div class="t" style="left:23.7px;top:357.4px;font-size:19px;color:#e8e8e8;">2</div>
<div class="r" style="left:11.0px;top:413.0px;width:36.0px;height:1.0px;background:#5a5a5a;"></div>
<div class="t" style="left:23.7px;top:390.9px;font-size:19px;color:#e8e8e8;">3</div>
<div class="r" style="left:11.0px;top:448.0px;width:36.0px;height:0.0px;background:#5a5a5a;"></div>
<div class="t" style="left:23.7px;top:425.4px;font-size:19px;color:#e8e8e8;">4</div>
<div class="r" style="left:11.0px;top:479.0px;width:36.0px;height:1.0px;background:#5a5a5a;"></div>
<div class="t" style="left:23.7px;top:457.1px;font-size:19px;color:#e8e8e8;">5</div>
<div class="r" style="left:11.0px;top:502.0px;width:36.0px;height:1.0px;background:#5a5a5a;"></div>
<div class="t" style="left:23.7px;top:479.6px;font-size:19px;color:#e8e8e8;">6</div>
<div class="r" style="left:11.0px;top:533.0px;width:36.0px;height:1.0px;background:#5a5a5a;"></div>
<div class="t" style="left:23.7px;top:510.9px;font-size:19px;color:#e8e8e8;">7</div>
<div class="r" style="left:11.0px;top:565.0px;width:36.0px;height:1.0px;background:#5a5a5a;"></div>
<div class="t" style="left:23.7px;top:543.0px;font-size:19px;color:#e8e8e8;">8</div>
<div class="r" style="left:11.0px;top:597.0px;width:36.0px;height:1.0px;background:#5a5a5a;"></div>
<div class="t" style="left:23.7px;top:575.1px;font-size:19px;color:#e8e8e8;">9</div>
<div class="r" style="left:11.0px;top:629.0px;width:36.0px;height:1.0px;background:#5a5a5a;"></div>
<div class="t" style="left:18.4px;top:607.2px;font-size:19px;color:#e8e8e8;">10</div>
<div class="r" style="left:11.0px;top:661.0px;width:36.0px;height:1.0px;background:#5a5a5a;"></div>
<div class="t" style="left:19.1px;top:638.9px;font-size:19px;color:#e8e8e8;">11</div>
<div class="r" style="left:11.0px;top:693.0px;width:36.0px;height:1.0px;background:#5a5a5a;"></div>
<div class="t" style="left:18.4px;top:671.0px;font-size:19px;color:#e8e8e8;">12</div>
<div class="r" style="left:11.0px;top:726.0px;width:36.0px;height:1.0px;background:#5a5a5a;"></div>
<div class="t" style="left:18.4px;top:703.5px;font-size:19px;color:#e8e8e8;">13</div>
<div class="r" style="left:11.0px;top:748.0px;width:36.0px;height:1.0px;background:#5a5a5a;"></div>
<div class="t" style="left:18.4px;top:725.5px;font-size:19px;color:#e8e8e8;">14</div>
<div class="r" style="left:11.0px;top:779.0px;width:36.0px;height:1.0px;background:#5a5a5a;"></div>
<div class="t" style="left:18.4px;top:757.0px;font-size:19px;color:#e8e8e8;">15</div>
<div class="r" style="left:11.0px;top:811.0px;width:36.0px;height:1.0px;background:#5a5a5a;"></div>
<div class="t" style="left:18.4px;top:789.1px;font-size:19px;color:#e8e8e8;">16</div>
<div class="r" style="left:11.0px;top:843.0px;width:36.0px;height:1.0px;background:#5a5a5a;"></div>
<div class="t" style="left:18.4px;top:821.2px;font-size:19px;color:#e8e8e8;">17</div>
<div class="r" style="left:11.0px;top:875.0px;width:36.0px;height:1.0px;background:#5a5a5a;"></div>
<div class="t" style="left:18.4px;top:853.3px;font-size:19px;color:#e8e8e8;">18</div>
<div class="r" style="left:11.0px;top:908.0px;width:36.0px;height:0.0px;background:#5a5a5a;"></div>
<div class="t" style="left:18.4px;top:885.4px;font-size:19px;color:#e8e8e8;">19</div>
<div class="r" style="left:11.0px;top:940.0px;width:36.0px;height:1.0px;background:#5a5a5a;"></div>
<div class="t" style="left:18.4px;top:917.5px;font-size:19px;color:#e8e8e8;">20</div>
<div class="r" style="left:11.0px;top:961.0px;width:36.0px;height:1.0px;background:#5a5a5a;"></div>
<div class="t" style="left:18.4px;top:939.3px;font-size:19px;color:#e8e8e8;">21</div>
<div class="r" style="left:11.0px;top:994.0px;width:36.0px;height:0.0px;background:#5a5a5a;"></div>
<div class="t" style="left:18.4px;top:971.4px;font-size:19px;color:#e8e8e8;">22</div>
<div class="r" style="left:11.0px;top:1026.0px;width:36.0px;height:1.0px;background:#5a5a5a;"></div>
<div class="t" style="left:18.4px;top:1003.5px;font-size:19px;color:#e8e8e8;">23</div>
<div class="r" style="left:11.0px;top:1058.0px;width:36.0px;height:1.0px;background:#5a5a5a;"></div>
<div class="t" style="left:18.4px;top:1035.5px;font-size:19px;color:#e8e8e8;">24</div>
<div class="r" style="left:11.0px;top:1089.0px;width:36.0px;height:1.0px;background:#5a5a5a;"></div>
<div class="t" style="left:18.4px;top:1067.1px;font-size:19px;color:#e8e8e8;">25</div>
<div class="r" style="left:11.0px;top:1121.0px;width:36.0px;height:1.0px;background:#5a5a5a;"></div>
<div class="t" style="left:18.4px;top:1098.8px;font-size:19px;color:#e8e8e8;">26</div>
<div class="r" style="left:11.0px;top:1153.0px;width:36.0px;height:1.0px;background:#5a5a5a;"></div>
<div class="t" style="left:18.4px;top:1130.8px;font-size:19px;color:#e8e8e8;">27</div>
<div class="r" style="left:11.0px;top:1175.0px;width:36.0px;height:1.0px;background:#5a5a5a;"></div>
<div class="t" style="left:18.4px;top:1153.3px;font-size:19px;color:#e8e8e8;">28</div>
<div class="r" style="left:11.0px;top:1207.0px;width:36.0px;height:1.0px;background:#5a5a5a;"></div>
<div class="t" style="left:18.4px;top:1184.9px;font-size:19px;color:#e8e8e8;">29</div>
<div class="r" style="left:11.0px;top:1242.0px;width:36.0px;height:0.0px;background:#5a5a5a;"></div>
<div class="t" style="left:18.4px;top:1219.4px;font-size:19px;color:#e8e8e8;">30</div>
<div class="r" style="left:11.0px;top:1276.0px;width:36.0px;height:1.0px;background:#5a5a5a;"></div>
<div class="t" style="left:18.4px;top:1253.9px;font-size:19px;color:#e8e8e8;">31</div>
<div class="r" style="left:11.0px;top:1311.0px;width:36.0px;height:1.0px;background:#5a5a5a;"></div>
<div class="t" style="left:18.4px;top:1289.1px;font-size:19px;color:#e8e8e8;">32</div>
<div class="r" style="left:11.0px;top:1328.0px;width:36.0px;height:1.0px;background:#5a5a5a;"></div>
<div class="t" style="left:18.4px;top:1305.6px;font-size:19px;color:#e8e8e8;">33</div>
<div class="r" style="left:11.0px;top:1359.0px;width:36.0px;height:1.0px;background:#5a5a5a;"></div>
<div class="t" style="left:18.4px;top:1337.1px;font-size:19px;color:#e8e8e8;">34</div>
<div class="r" style="left:11.0px;top:1400.0px;width:36.0px;height:1.0px;background:#5a5a5a;"></div>
<div class="t" style="left:18.4px;top:1378.0px;font-size:19px;color:#e8e8e8;">36</div>
<div class="r" style="left:11.0px;top:1436.0px;width:36.0px;height:1.0px;background:#5a5a5a;"></div>
<div class="t" style="left:18.4px;top:1414.1px;font-size:19px;color:#e8e8e8;">37</div>
<div class="r" style="left:11.0px;top:1472.0px;width:36.0px;height:1.0px;background:#5a5a5a;"></div>
<div class="t" style="left:18.4px;top:1449.9px;font-size:19px;color:#e8e8e8;">38</div>
<div class="r" style="left:11.0px;top:1508.0px;width:36.0px;height:1.0px;background:#5a5a5a;"></div>
<div class="t" style="left:18.4px;top:1486.3px;font-size:19px;color:#e8e8e8;">39</div>
<div class="r" style="left:11.0px;top:1544.0px;width:36.0px;height:1.0px;background:#5a5a5a;"></div>
<div class="t" style="left:18.4px;top:1522.1px;font-size:19px;color:#e8e8e8;">40</div>
<div class="r" style="left:11.0px;top:1580.0px;width:36.0px;height:1.0px;background:#5a5a5a;"></div>
<div class="t" style="left:18.4px;top:1558.2px;font-size:19px;color:#e8e8e8;">41</div>
<div class="r" style="left:11.0px;top:1616.0px;width:36.0px;height:1.0px;background:#5a5a5a;"></div>
<div class="t" style="left:18.4px;top:1594.3px;font-size:19px;color:#e8e8e8;">42</div>
<div class="r" style="left:11.0px;top:1652.0px;width:36.0px;height:1.0px;background:#5a5a5a;"></div>
<div class="t" style="left:18.4px;top:1630.2px;font-size:19px;color:#e8e8e8;">43</div>
<div class="r" style="left:11.0px;top:1670.0px;width:36.0px;height:1.0px;background:#5a5a5a;"></div>
<div class="r" style="left:11.0px;top:1364.0px;width:36.0px;height:1.0px;background:#5a5a5a;"></div>
<div class="r" style="left:47.0px;top:301.0px;width:2814.0px;height:1369.0px;background:#fff;"></div>
<div class="r" style="left:47.0px;top:301.0px;width:2.0px;height:43.0px;background:#1f7a3d;"></div>
<div class="r" style="left:47.0px;top:479.0px;width:2814.0px;height:1.0px;background:#9a9a9a;"></div>
<div class="t" style="left:81.0px;top:307.2px;font-size:34px;color:#222;font-weight:bold;letter-spacing:0.60px;-webkit-text-stroke:0.5px #222;">Revenue Assumptions</div>
<div class="t" style="left:80.0px;top:348.8px;font-size:28px;color:#000;font-weight:bold;letter-spacing:1.00px;-webkit-text-stroke:0.5px #000;">ABC Company Inc.</div>
<div class="t" style="left:77.5px;top:386.0px;font-size:19.5px;color:#2f7be6;font-weight:bold;letter-spacing:0.29px;">Go to Table of Contents</div>
<div class="r" style="left:78.0px;top:404.0px;width:226.0px;height:2.0px;background:#2f7be6;"></div>
<div class="r" style="left:105.0px;top:448.0px;width:1450.0px;height:31.0px;background:#6d72e6;"></div>
<div class="t" style="left:111.0px;top:453.4px;font-size:22px;color:#fff;font-weight:bold;letter-spacing:0.44px;-webkit-text-stroke:0.45px #fff;">Fiscal Year</div>
<div class="t" style="left:946.6px;top:455.0px;font-size:19.5px;color:#fff;font-weight:bold;letter-spacing:1.11px;-webkit-text-stroke:0.45px #fff;">2026</div>
<div class="t" style="left:1076.7px;top:455.0px;font-size:19.5px;color:#fff;font-weight:bold;letter-spacing:1.11px;-webkit-text-stroke:0.45px #fff;">2027</div>
<div class="t" style="left:1206.7px;top:455.0px;font-size:19.5px;color:#fff;font-weight:bold;letter-spacing:1.11px;-webkit-text-stroke:0.45px #fff;">2028</div>
<div class="t" style="left:1336.7px;top:455.0px;font-size:19.5px;color:#fff;font-weight:bold;letter-spacing:1.11px;-webkit-text-stroke:0.45px #fff;">2029</div>
<div class="t" style="left:1466.7px;top:455.0px;font-size:19.5px;color:#fff;font-weight:bold;letter-spacing:1.11px;-webkit-text-stroke:0.45px #fff;">2030</div>
<div class="r" style="left:905.0px;top:448.0px;width:1.0px;height:31.0px;background:#fff;"></div>
<div class="r" style="left:1035.0px;top:448.0px;width:1.0px;height:31.0px;background:#fff;"></div>
<div class="r" style="left:1165.0px;top:448.0px;width:1.0px;height:31.0px;background:#fff;"></div>
<div class="r" style="left:1295.0px;top:448.0px;width:1.0px;height:31.0px;background:#fff;"></div>
<div class="r" style="left:1425.0px;top:448.0px;width:1.0px;height:31.0px;background:#fff;"></div>
<div class="r" style="left:1582.0px;top:448.0px;width:1224.0px;height:31.0px;background:#6d72e6;"></div>
<div class="t" style="left:1616.2px;top:454.5px;font-size:19.5px;color:#fff;font-weight:bold;-webkit-text-stroke:0.45px #fff;">Jan</div>
<div class="t" style="left:1717.7px;top:454.5px;font-size:19.5px;color:#fff;font-weight:bold;-webkit-text-stroke:0.45px #fff;">Feb</div>
<div class="r" style="left:1684.0px;top:448.0px;width:1.0px;height:31.0px;background:#fff;"></div>
<div class="t" style="left:1819.7px;top:454.5px;font-size:19.5px;color:#fff;font-weight:bold;-webkit-text-stroke:0.45px #fff;">Mar</div>
<div class="r" style="left:1786.0px;top:448.0px;width:1.0px;height:31.0px;background:#fff;"></div>
<div class="t" style="left:1922.2px;top:454.5px;font-size:19.5px;color:#fff;font-weight:bold;-webkit-text-stroke:0.45px #fff;">Apr</div>
<div class="r" style="left:1888.0px;top:448.0px;width:1.0px;height:31.0px;background:#fff;"></div>
<div class="t" style="left:2022.0px;top:454.5px;font-size:19.5px;color:#fff;font-weight:bold;-webkit-text-stroke:0.45px #fff;">May</div>
<div class="r" style="left:1990.0px;top:448.0px;width:1.0px;height:31.0px;background:#fff;"></div>
<div class="t" style="left:2125.7px;top:454.5px;font-size:19.5px;color:#fff;font-weight:bold;-webkit-text-stroke:0.45px #fff;">Jun</div>
<div class="r" style="left:2092.0px;top:448.0px;width:1.0px;height:31.0px;background:#fff;"></div>
<div class="t" style="left:2230.9px;top:454.5px;font-size:19.5px;color:#fff;font-weight:bold;-webkit-text-stroke:0.45px #fff;">Jul</div>
<div class="r" style="left:2194.0px;top:448.0px;width:1.0px;height:31.0px;background:#fff;"></div>
<div class="t" style="left:2328.0px;top:454.5px;font-size:19.5px;color:#fff;font-weight:bold;-webkit-text-stroke:0.45px #fff;">Aug</div>
<div class="r" style="left:2296.0px;top:448.0px;width:1.0px;height:31.0px;background:#fff;"></div>
<div class="t" style="left:2431.1px;top:454.5px;font-size:19.5px;color:#fff;font-weight:bold;-webkit-text-stroke:0.45px #fff;">Sep</div>
<div class="r" style="left:2398.0px;top:448.0px;width:1.0px;height:31.0px;background:#fff;"></div>
<div class="t" style="left:2534.7px;top:454.5px;font-size:19.5px;color:#fff;font-weight:bold;-webkit-text-stroke:0.45px #fff;">Oct</div>
<div class="r" style="left:2500.0px;top:448.0px;width:1.0px;height:31.0px;background:#fff;"></div>
<div class="t" style="left:2634.6px;top:454.5px;font-size:19.5px;color:#fff;font-weight:bold;-webkit-text-stroke:0.45px #fff;">Nov</div>
<div class="r" style="left:2602.0px;top:448.0px;width:1.0px;height:31.0px;background:#fff;"></div>
<div class="t" style="left:2737.1px;top:454.5px;font-size:19.5px;color:#fff;font-weight:bold;-webkit-text-stroke:0.45px #fff;">Dec</div>
<div class="r" style="left:2704.0px;top:448.0px;width:1.0px;height:31.0px;background:#fff;"></div>
<div class="r" style="left:106.0px;top:502.0px;width:1449.0px;height:31.0px;background:#4a4ecf;"></div>
<div class="t" style="left:110.3px;top:507.9px;font-size:22px;color:#fff;font-weight:bold;letter-spacing:0.16px;-webkit-text-stroke:0.45px #fff;">Assumptions</div>
<div class="r" style="left:771.0px;top:502.0px;width:1.0px;height:31.0px;background:#fff;"></div>
<div class="t" style="left:798.8px;top:507.9px;font-size:22px;color:#fff;font-weight:bold;letter-spacing:0.05px;-webkit-text-stroke:0.45px #fff;">Launch</div>
<div class="r" style="left:905.0px;top:502.0px;width:1.0px;height:31.0px;background:#fff;"></div>
<div class="t" style="left:1079.5px;top:507.9px;font-size:22px;color:#fff;font-weight:bold;letter-spacing:0.45px;-webkit-text-stroke:0.45px #fff;">Annual Visits (Tickets) Sold</div>
<div class="r" style="left:106.0px;top:533.0px;width:1449.0px;height:160.0px;background:#fff06a;"></div>
<div class="r" style="left:106.0px;top:565.0px;width:1449.0px;height:1.0px;background:#fff;"></div>
<div class="r" style="left:106.0px;top:597.0px;width:1449.0px;height:1.0px;background:#fff;"></div>
<div class="r" style="left:106.0px;top:629.0px;width:1449.0px;height:1.0px;background:#fff;"></div>
<div class="r" style="left:106.0px;top:661.0px;width:1449.0px;height:1.0px;background:#fff;"></div>
<div class="r" style="left:771.0px;top:533.0px;width:1.0px;height:160.0px;background:#fff;"></div>
<div class="r" style="left:905.0px;top:533.0px;width:1.0px;height:160.0px;background:#fff;"></div>
<div class="r" style="left:1035.0px;top:533.0px;width:1.0px;height:160.0px;background:#fff;"></div>
<div class="r" style="left:1165.0px;top:533.0px;width:1.0px;height:160.0px;background:#fff;"></div>
<div class="r" style="left:1295.0px;top:533.0px;width:1.0px;height:160.0px;background:#fff;"></div>
<div class="r" style="left:1425.0px;top:533.0px;width:1.0px;height:160.0px;background:#fff;"></div>
<div class="r" style="left:106.0px;top:533.0px;width:1449.0px;height:1.0px;background:#fff;"></div>
<div class="t" style="left:109.0px;top:540.7px;font-size:18.2px;color:#000;letter-spacing:-0.31px;">Game Play Sessions</div>
<div class="t" style="left:810.2px;top:540.7px;font-size:18.2px;color:#000;">Jan-26</div>
<div class="t" style="left:942.2px;top:540.7px;font-size:18.2px;color:#000;">20,000</div>
<div class="t" style="left:1072.2px;top:540.7px;font-size:18.2px;color:#000;">28,000</div>
<div class="t" style="left:1202.2px;top:540.7px;font-size:18.2px;color:#000;">35,000</div>
<div class="t" style="left:1332.2px;top:540.7px;font-size:18.2px;color:#000;">42,000</div>
<div class="t" style="left:1462.2px;top:540.7px;font-size:18.2px;color:#000;">50,000</div>
<div class="t" style="left:109.0px;top:572.8px;font-size:18.2px;color:#000;">F&amp;B Transactions</div>
<div class="t" style="left:810.2px;top:572.8px;font-size:18.2px;color:#000;">Jan-26</div>
<div class="t" style="left:942.2px;top:572.8px;font-size:18.2px;color:#000;">15,000</div>
<div class="t" style="left:1072.2px;top:572.8px;font-size:18.2px;color:#000;">21,000</div>
<div class="t" style="left:1202.2px;top:572.8px;font-size:18.2px;color:#000;">28,000</div>
<div class="t" style="left:1332.2px;top:572.8px;font-size:18.2px;color:#000;">34,000</div>
<div class="t" style="left:1462.2px;top:572.8px;font-size:18.2px;color:#000;">40,000</div>
<div class="t" style="left:109.0px;top:604.9px;font-size:18.2px;color:#000;">Event Bookings</div>
<div class="t" style="left:810.2px;top:604.9px;font-size:18.2px;color:#000;">Jan-26</div>
<div class="t" style="left:959.9px;top:604.9px;font-size:18.2px;color:#000;">50</div>
<div class="t" style="left:1089.9px;top:604.9px;font-size:18.2px;color:#000;">75</div>
<div class="t" style="left:1214.8px;top:604.9px;font-size:18.2px;color:#000;">100</div>
<div class="t" style="left:1344.8px;top:604.9px;font-size:18.2px;color:#000;">125</div>
<div class="t" style="left:1474.8px;top:604.9px;font-size:18.2px;color:#000;">150</div>
<div class="t" style="left:109.0px;top:636.6px;font-size:18.2px;color:#000;">-</div>
<div class="t" style="left:810.2px;top:636.6px;font-size:18.2px;color:#000;">Jan-26</div>
<div class="t" style="left:109.0px;top:668.7px;font-size:18.2px;color:#000;">-</div>
<div class="t" style="left:810.2px;top:668.7px;font-size:18.2px;color:#000;">Jan-26</div>
<div class="r" style="left:105.0px;top:693.0px;width:1450.0px;height:33.0px;background:#4cb3e8;"></div>
<div class="t" style="left:110.0px;top:700.1px;font-size:19.5px;color:#fff;font-weight:bold;-webkit-text-stroke:0.45px #fff;">Total</div>
<div class="t" style="left:957.2px;top:700.1px;font-size:19.5px;color:#fff;font-weight:bold;letter-spacing:1.13px;-webkit-text-stroke:0.45px #fff;">35,050</div>
<div class="t" style="left:1087.2px;top:700.1px;font-size:19.5px;color:#fff;font-weight:bold;letter-spacing:1.13px;-webkit-text-stroke:0.45px #fff;">49,075</div>
<div class="t" style="left:1217.2px;top:700.1px;font-size:19.5px;color:#fff;font-weight:bold;letter-spacing:1.13px;-webkit-text-stroke:0.45px #fff;">63,100</div>
<div class="t" style="left:1347.2px;top:700.1px;font-size:19.5px;color:#fff;font-weight:bold;letter-spacing:1.13px;-webkit-text-stroke:0.45px #fff;">76,125</div>
<div class="t" style="left:1477.2px;top:700.1px;font-size:19.5px;color:#fff;font-weight:bold;letter-spacing:1.13px;-webkit-text-stroke:0.45px #fff;">90,150</div>
<div class="r" style="left:106.0px;top:748.0px;width:1449.0px;height:31.0px;background:#4a4ecf;"></div>
<div class="t" style="left:110.3px;top:754.0px;font-size:22px;color:#fff;font-weight:bold;letter-spacing:0.16px;-webkit-text-stroke:0.45px #fff;">Assumptions</div>
<div class="r" style="left:905.0px;top:748.0px;width:1.0px;height:31.0px;background:#fff;"></div>
<div class="t" style="left:1114.8px;top:754.0px;font-size:22px;color:#fff;font-weight:bold;letter-spacing:0.73px;-webkit-text-stroke:0.45px #fff;">Visit (Ticket) Price, $</div>
<div class="r" style="left:905.0px;top:779.0px;width:650.0px;height:161.0px;background:#fff06a;"></div>
<div class="r" style="left:905.0px;top:811.0px;width:650.0px;height:1.0px;background:#fff;"></div>
<div class="r" style="left:905.0px;top:843.0px;width:650.0px;height:1.0px;background:#fff;"></div>
<div class="r" style="left:905.0px;top:875.0px;width:650.0px;height:1.0px;background:#fff;"></div>
<div class="r" style="left:905.0px;top:907.0px;width:650.0px;height:1.0px;background:#fff;"></div>
<div class="r" style="left:905.0px;top:779.0px;width:1.0px;height:161.0px;background:#fff;"></div>
<div class="r" style="left:1035.0px;top:779.0px;width:1.0px;height:161.0px;background:#fff;"></div>
<div class="r" style="left:1165.0px;top:779.0px;width:1.0px;height:161.0px;background:#fff;"></div>
<div class="r" style="left:1295.0px;top:779.0px;width:1.0px;height:161.0px;background:#fff;"></div>
<div class="r" style="left:1425.0px;top:779.0px;width:1.0px;height:161.0px;background:#fff;"></div>
<div class="r" style="left:905.0px;top:779.0px;width:650.0px;height:1.0px;background:#fff;"></div>
<div class="t" style="left:109.0px;top:785.9px;font-size:19.3px;color:#1c1c1c;font-weight:bold;letter-spacing:-0.01px;">Game Play Sessions</div>
<div class="t" style="left:952.3px;top:786.8px;font-size:18.2px;color:#000;">25.0</div>
<div class="t" style="left:1082.3px;top:786.8px;font-size:18.2px;color:#000;">26.0</div>
<div class="t" style="left:1212.3px;top:786.8px;font-size:18.2px;color:#000;">27.5</div>
<div class="t" style="left:1342.3px;top:786.8px;font-size:18.2px;color:#000;">28.5</div>
<div class="t" style="left:1472.3px;top:786.8px;font-size:18.2px;color:#000;">30.0</div>
<div class="t" style="left:109.0px;top:818.0px;font-size:19.3px;color:#1c1c1c;font-weight:bold;letter-spacing:0.17px;">F&amp;B Transactions</div>
<div class="t" style="left:952.3px;top:818.9px;font-size:18.2px;color:#000;">12.0</div>
<div class="t" style="left:1082.3px;top:818.9px;font-size:18.2px;color:#000;">12.5</div>
<div class="t" style="left:1212.3px;top:818.9px;font-size:18.2px;color:#000;">13.5</div>
<div class="t" style="left:1342.3px;top:818.9px;font-size:18.2px;color:#000;">14.0</div>
<div class="t" style="left:1472.3px;top:818.9px;font-size:18.2px;color:#000;">15.0</div>
<div class="t" style="left:109.0px;top:850.1px;font-size:19.3px;color:#1c1c1c;font-weight:bold;letter-spacing:0.13px;">Event Bookings</div>
<div class="t" style="left:939.6px;top:851.0px;font-size:18.2px;color:#000;">1,500.0</div>
<div class="t" style="left:1069.6px;top:851.0px;font-size:18.2px;color:#000;">1,750.0</div>
<div class="t" style="left:1199.6px;top:851.0px;font-size:18.2px;color:#000;">2,000.0</div>
<div class="t" style="left:1329.6px;top:851.0px;font-size:18.2px;color:#000;">2,250.0</div>
<div class="t" style="left:1459.6px;top:851.0px;font-size:18.2px;color:#000;">2,500.0</div>
<div class="t" style="left:109.0px;top:882.2px;font-size:19.3px;color:#1c1c1c;font-weight:bold;">-</div>
<div class="t" style="left:109.0px;top:914.3px;font-size:19.3px;color:#1c1c1c;font-weight:bold;">-</div>
<div class="r" style="left:106.0px;top:961.0px;width:1449.0px;height:33.0px;background:#4a4ecf;"></div>
<div class="t" style="left:110.3px;top:968.4px;font-size:22px;color:#fff;font-weight:bold;letter-spacing:0.16px;-webkit-text-stroke:0.45px #fff;">Assumptions</div>
<div class="r" style="left:771.0px;top:961.0px;width:1.0px;height:33.0px;background:#fff;"></div>
<div class="t" style="left:798.8px;top:968.4px;font-size:22px;color:#fff;font-weight:bold;letter-spacing:0.05px;-webkit-text-stroke:0.45px #fff;">Launch</div>
<div class="r" style="left:905.0px;top:961.0px;width:1.0px;height:33.0px;background:#fff;"></div>
<div class="t" style="left:1100.6px;top:968.4px;font-size:22px;color:#fff;font-weight:bold;letter-spacing:0.78px;-webkit-text-stroke:0.45px #fff;">Extra Annual Income, $</div>
<div class="r" style="left:106.0px;top:994.0px;width:1449.0px;height:159.0px;background:#fff06a;"></div>
<div class="r" style="left:106.0px;top:1025.0px;width:1449.0px;height:1.0px;background:#fff;"></div>
<div class="r" style="left:106.0px;top:1057.0px;width:1449.0px;height:1.0px;background:#fff;"></div>
<div class="r" style="left:106.0px;top:1089.0px;width:1449.0px;height:1.0px;background:#fff;"></div>
<div class="r" style="left:106.0px;top:1120.0px;width:1449.0px;height:1.0px;background:#fff;"></div>
<div class="r" style="left:771.0px;top:994.0px;width:1.0px;height:159.0px;background:#fff;"></div>
<div class="r" style="left:905.0px;top:994.0px;width:1.0px;height:159.0px;background:#fff;"></div>
<div class="r" style="left:1035.0px;top:994.0px;width:1.0px;height:159.0px;background:#fff;"></div>
<div class="r" style="left:1165.0px;top:994.0px;width:1.0px;height:159.0px;background:#fff;"></div>
<div class="r" style="left:1295.0px;top:994.0px;width:1.0px;height:159.0px;background:#fff;"></div>
<div class="r" style="left:1425.0px;top:994.0px;width:1.0px;height:159.0px;background:#fff;"></div>
<div class="r" style="left:106.0px;top:993.0px;width:1449.0px;height:1.0px;background:#fff;"></div>
<div class="t" style="left:109.0px;top:1001.2px;font-size:18.2px;color:#000;">Merchandise Sales</div>
<div class="t" style="left:810.2px;top:1001.2px;font-size:18.2px;color:#000;">Jan-26</div>
<div class="t" style="left:986.5px;top:1001.2px;font-size:18.2px;color:#000;">5,000</div>
<div class="t" style="left:1116.5px;top:1001.2px;font-size:18.2px;color:#000;">7,500</div>
<div class="t" style="left:1236.3px;top:1001.2px;font-size:18.2px;color:#000;">10,000</div>
<div class="t" style="left:1366.3px;top:1001.2px;font-size:18.2px;color:#000;">12,500</div>
<div class="t" style="left:1496.3px;top:1001.2px;font-size:18.2px;color:#000;">15,000</div>
<div class="t" style="left:109.0px;top:1033.2px;font-size:18.2px;color:#000;">Locker Rentals</div>
<div class="t" style="left:810.2px;top:1033.2px;font-size:18.2px;color:#000;">Jan-26</div>
<div class="t" style="left:986.5px;top:1033.2px;font-size:18.2px;color:#000;">1,000</div>
<div class="t" style="left:1116.5px;top:1033.2px;font-size:18.2px;color:#000;">1,500</div>
<div class="t" style="left:1246.5px;top:1033.2px;font-size:18.2px;color:#000;">2,000</div>
<div class="t" style="left:1376.5px;top:1033.2px;font-size:18.2px;color:#000;">2,500</div>
<div class="t" style="left:1506.5px;top:1033.2px;font-size:18.2px;color:#000;">3,000</div>
<div class="t" style="left:109.0px;top:1064.8px;font-size:18.2px;color:#000;">Sponsorships</div>
<div class="t" style="left:810.2px;top:1064.8px;font-size:18.2px;color:#000;">Jan-26</div>
<div class="t" style="left:986.5px;top:1064.8px;font-size:18.2px;color:#000;">2,000</div>
<div class="t" style="left:1116.5px;top:1064.8px;font-size:18.2px;color:#000;">3,500</div>
<div class="t" style="left:1246.5px;top:1064.8px;font-size:18.2px;color:#000;">5,000</div>
<div class="t" style="left:1376.5px;top:1064.8px;font-size:18.2px;color:#000;">6,500</div>
<div class="t" style="left:1506.5px;top:1064.8px;font-size:18.2px;color:#000;">7,500</div>
<div class="t" style="left:109.0px;top:1096.5px;font-size:18.2px;color:#000;">-</div>
<div class="t" style="left:810.2px;top:1096.5px;font-size:18.2px;color:#000;">Jan-26</div>
<div class="t" style="left:109.0px;top:1128.5px;font-size:18.2px;color:#000;">-</div>
<div class="t" style="left:810.2px;top:1128.5px;font-size:18.2px;color:#000;">Jan-26</div>
<div class="r" style="left:106.0px;top:1175.0px;width:1449.0px;height:32.0px;background:#4a4ecf;"></div>
<div class="t" style="left:110.3px;top:1181.9px;font-size:22px;color:#fff;font-weight:bold;letter-spacing:0.50px;-webkit-text-stroke:0.45px #fff;">Revenue Categories</div>
<div class="r" style="left:905.0px;top:1175.0px;width:1.0px;height:32.0px;background:#fff;"></div>
<div class="t" style="left:1137.8px;top:1181.9px;font-size:22px;color:#fff;font-weight:bold;letter-spacing:0.75px;-webkit-text-stroke:0.45px #fff;">Total Revenue, $</div>
<div class="t" style="left:109.0px;top:1215.2px;font-size:19.3px;color:#1c1c1c;font-weight:bold;letter-spacing:0.50px;">Visits (Tickets) Revenue</div>
<div class="t" style="left:958.2px;top:1216.1px;font-size:18.2px;color:#000;">755,000</div>
<div class="t" style="left:1073.0px;top:1216.1px;font-size:18.2px;color:#000;">1,121,750</div>
<div class="t" style="left:1203.0px;top:1216.1px;font-size:18.2px;color:#000;">1,540,500</div>
<div class="t" style="left:1333.0px;top:1216.1px;font-size:18.2px;color:#000;">1,954,250</div>
<div class="t" style="left:1463.0px;top:1216.1px;font-size:18.2px;color:#000;">2,475,000</div>
<div class="t" style="left:109.0px;top:1249.7px;font-size:19.3px;color:#1c1c1c;font-weight:bold;letter-spacing:0.58px;">Extra Income</div>
<div class="t" style="left:978.5px;top:1250.6px;font-size:18.2px;color:#000;">8,000</div>
<div class="t" style="left:1098.3px;top:1250.6px;font-size:18.2px;color:#000;">12,500</div>
<div class="t" style="left:1228.3px;top:1250.6px;font-size:18.2px;color:#000;">17,000</div>
<div class="t" style="left:1358.3px;top:1250.6px;font-size:18.2px;color:#000;">21,500</div>
<div class="t" style="left:1488.3px;top:1250.6px;font-size:18.2px;color:#000;">25,500</div>
<div class="r" style="left:105.0px;top:1276.0px;width:1450.0px;height:35.0px;background:#4cb3e8;"></div>
<div class="r" style="left:905.0px;top:1276.0px;width:1.0px;height:35.0px;background:#fff;"></div>
<div class="r" style="left:1035.0px;top:1276.0px;width:1.0px;height:35.0px;background:#fff;"></div>
<div class="r" style="left:1165.0px;top:1276.0px;width:1.0px;height:35.0px;background:#fff;"></div>
<div class="r" style="left:1295.0px;top:1276.0px;width:1.0px;height:35.0px;background:#fff;"></div>
<div class="r" style="left:1425.0px;top:1276.0px;width:1.0px;height:35.0px;background:#fff;"></div>
<div class="t" style="left:110.0px;top:1284.7px;font-size:19.5px;color:#fff;font-weight:bold;-webkit-text-stroke:0.45px #fff;">Total</div>
<div class="t" style="left:945.3px;top:1284.7px;font-size:19.5px;color:#fff;font-weight:bold;letter-spacing:1.12px;-webkit-text-stroke:0.45px #fff;">763,000</div>
<div class="t" style="left:1057.5px;top:1284.7px;font-size:19.5px;color:#fff;font-weight:bold;letter-spacing:1.03px;-webkit-text-stroke:0.45px #fff;">1,134,250</div>
<div class="t" style="left:1187.5px;top:1284.7px;font-size:19.5px;color:#fff;font-weight:bold;letter-spacing:1.03px;-webkit-text-stroke:0.45px #fff;">1,557,500</div>
<div class="t" style="left:1317.5px;top:1284.7px;font-size:19.5px;color:#fff;font-weight:bold;letter-spacing:1.03px;-webkit-text-stroke:0.45px #fff;">1,975,750</div>
<div class="t" style="left:1447.5px;top:1284.7px;font-size:19.5px;color:#fff;font-weight:bold;letter-spacing:1.03px;-webkit-text-stroke:0.45px #fff;">2,500,500</div>
<div class="r" style="left:1582.0px;top:502.0px;width:1224.0px;height:31.0px;background:#4a4ecf;"></div>
<div class="t" style="left:2079.5px;top:507.9px;font-size:22px;color:#fff;font-weight:bold;letter-spacing:0.49px;-webkit-text-stroke:0.45px #fff;">Revenue Seasonality</div>
<div class="r" style="left:1584.0px;top:535.0px;width:98.0px;height:28.0px;background:#fff06a;"></div>
<div class="t" style="left:1611.0px;top:539.8px;font-size:19.2px;color:#000;letter-spacing:0.08px;">8.3%</div>
<div class="r" style="left:1686.0px;top:535.0px;width:98.0px;height:28.0px;background:#fff06a;"></div>
<div class="t" style="left:1713.0px;top:539.8px;font-size:19.2px;color:#000;letter-spacing:0.08px;">8.3%</div>
<div class="r" style="left:1788.0px;top:535.0px;width:98.0px;height:28.0px;background:#fff06a;"></div>
<div class="t" style="left:1815.0px;top:539.8px;font-size:19.2px;color:#000;letter-spacing:0.08px;">8.3%</div>
<div class="r" style="left:1890.0px;top:535.0px;width:98.0px;height:28.0px;background:#fff06a;"></div>
<div class="t" style="left:1917.0px;top:539.8px;font-size:19.2px;color:#000;letter-spacing:0.08px;">8.3%</div>
<div class="r" style="left:1992.0px;top:535.0px;width:98.0px;height:28.0px;background:#fff06a;"></div>
<div class="t" style="left:2019.0px;top:539.8px;font-size:19.2px;color:#000;letter-spacing:0.08px;">8.3%</div>
<div class="r" style="left:2094.0px;top:535.0px;width:98.0px;height:28.0px;background:#fff06a;"></div>
<div class="t" style="left:2121.0px;top:539.8px;font-size:19.2px;color:#000;letter-spacing:0.08px;">8.3%</div>
<div class="r" style="left:2196.0px;top:535.0px;width:98.0px;height:28.0px;background:#fff06a;"></div>
<div class="t" style="left:2223.0px;top:539.8px;font-size:19.2px;color:#000;letter-spacing:0.08px;">8.3%</div>
<div class="r" style="left:2298.0px;top:535.0px;width:98.0px;height:28.0px;background:#fff06a;"></div>
<div class="t" style="left:2325.0px;top:539.8px;font-size:19.2px;color:#000;letter-spacing:0.08px;">8.3%</div>
<div class="r" style="left:2400.0px;top:535.0px;width:98.0px;height:28.0px;background:#fff06a;"></div>
<div class="t" style="left:2427.0px;top:539.8px;font-size:19.2px;color:#000;letter-spacing:0.08px;">8.3%</div>
<div class="r" style="left:2502.0px;top:535.0px;width:98.0px;height:28.0px;background:#fff06a;"></div>
<div class="t" style="left:2529.0px;top:539.8px;font-size:19.2px;color:#000;letter-spacing:0.08px;">8.3%</div>
<div class="r" style="left:2604.0px;top:535.0px;width:98.0px;height:28.0px;background:#fff06a;"></div>
<div class="t" style="left:2631.0px;top:539.8px;font-size:19.2px;color:#000;letter-spacing:0.08px;">8.3%</div>
<div class="r" style="left:2706.0px;top:535.0px;width:98.0px;height:28.0px;background:#d8dae6;"></div>
<div class="t" style="left:2729.0px;top:539.6px;font-size:19.5px;color:#1c1c1c;font-weight:bold;letter-spacing:2.52px;">8.3%</div>
<div class="r" style="left:1582.0px;top:597.0px;width:1224.0px;height:32.0px;background:#4a4ecf;"></div>
<div class="t" style="left:2054.0px;top:604.2px;font-size:22px;color:#fff;font-weight:bold;letter-spacing:0.57px;-webkit-text-stroke:0.45px #fff;">Total Visits (Tickets) Sold</div>
<div class="r" style="left:1582.0px;top:961.0px;width:1224.0px;height:33.0px;background:#4a4ecf;"></div>
<div class="t" style="left:2067.2px;top:968.4px;font-size:22px;color:#fff;font-weight:bold;letter-spacing:0.67px;-webkit-text-stroke:0.45px #fff;">Revenue Breakdown, $</div>
<div class="r" style="left:1719.0px;top:900.0px;width:1086.0px;height:1.0px;background:#5e9cc2;"></div>
<div class="t" style="left:1677.5px;top:890.7px;font-size:19.5px;color:#000;font-weight:bold;">-</div>
<div class="r" style="left:1719.0px;top:875.0px;width:1086.0px;height:1.0px;background:#5e9cc2;"></div>
<div class="t" style="left:1629.5px;top:866.2px;font-size:19.5px;color:#000;font-weight:bold;letter-spacing:1.37px;">10,000</div>
<div class="r" style="left:1719.0px;top:851.0px;width:1086.0px;height:1.0px;background:#5e9cc2;"></div>
<div class="t" style="left:1629.5px;top:841.7px;font-size:19.5px;color:#000;font-weight:bold;letter-spacing:1.37px;">20,000</div>
<div class="r" style="left:1719.0px;top:826.0px;width:1086.0px;height:1.0px;background:#5e9cc2;"></div>
<div class="t" style="left:1629.5px;top:817.2px;font-size:19.5px;color:#000;font-weight:bold;letter-spacing:1.37px;">30,000</div>
<div class="r" style="left:1719.0px;top:802.0px;width:1086.0px;height:1.0px;background:#5e9cc2;"></div>
<div class="t" style="left:1629.5px;top:792.7px;font-size:19.5px;color:#000;font-weight:bold;letter-spacing:1.37px;">40,000</div>
<div class="r" style="left:1719.0px;top:777.0px;width:1086.0px;height:1.0px;background:#5e9cc2;"></div>
<div class="t" style="left:1629.5px;top:768.1px;font-size:19.5px;color:#000;font-weight:bold;letter-spacing:1.37px;">50,000</div>
<div class="r" style="left:1719.0px;top:753.0px;width:1086.0px;height:1.0px;background:#5e9cc2;"></div>
<div class="t" style="left:1629.5px;top:743.6px;font-size:19.5px;color:#000;font-weight:bold;letter-spacing:1.37px;">60,000</div>
<div class="r" style="left:1719.0px;top:728.0px;width:1086.0px;height:1.0px;background:#5e9cc2;"></div>
<div class="t" style="left:1629.5px;top:719.1px;font-size:19.5px;color:#000;font-weight:bold;letter-spacing:1.37px;">70,000</div>
<div class="r" style="left:1719.0px;top:704.0px;width:1086.0px;height:1.0px;background:#5e9cc2;"></div>
<div class="t" style="left:1629.5px;top:694.6px;font-size:19.5px;color:#000;font-weight:bold;letter-spacing:1.37px;">80,000</div>
<div class="r" style="left:1719.0px;top:679.0px;width:1086.0px;height:1.0px;background:#5e9cc2;"></div>
<div class="t" style="left:1629.5px;top:670.1px;font-size:19.5px;color:#000;font-weight:bold;letter-spacing:1.37px;">90,000</div>
<div class="r" style="left:1719.0px;top:655.0px;width:1086.0px;height:1.0px;background:#5e9cc2;"></div>
<div class="t" style="left:1617.8px;top:645.6px;font-size:19.5px;color:#000;font-weight:bold;letter-spacing:1.29px;">100,000</div>
<div class="r" style="left:1719.0px;top:900.0px;width:1.0px;height:8.0px;background:#5e9cc2;"></div>
<div class="r" style="left:1936.0px;top:900.0px;width:1.0px;height:8.0px;background:#5e9cc2;"></div>
<div class="r" style="left:2153.0px;top:900.0px;width:1.0px;height:8.0px;background:#5e9cc2;"></div>
<div class="r" style="left:2370.0px;top:900.0px;width:1.0px;height:8.0px;background:#5e9cc2;"></div>
<div class="r" style="left:2587.0px;top:900.0px;width:1.0px;height:8.0px;background:#5e9cc2;"></div>
<div class="r" style="left:1760.0px;top:814.0px;width:136.0px;height:86.0px;background:#4cb3e8;"></div>
<div class="t" style="left:1801.0px;top:925.4px;font-size:22px;color:#000;font-weight:bold;letter-spacing:1.82px;">2026</div>
<div class="r" style="left:1977.0px;top:780.0px;width:136.0px;height:120.0px;background:#4cb3e8;"></div>
<div class="t" style="left:2018.2px;top:925.4px;font-size:22px;color:#000;font-weight:bold;letter-spacing:1.82px;">2027</div>
<div class="r" style="left:2195.0px;top:746.0px;width:136.0px;height:154.0px;background:#4cb3e8;"></div>
<div class="t" style="left:2235.4px;top:925.4px;font-size:22px;color:#000;font-weight:bold;letter-spacing:1.82px;">2028</div>
<div class="r" style="left:2412.0px;top:714.0px;width:136.0px;height:186.0px;background:#4cb3e8;"></div>
<div class="t" style="left:2452.6px;top:925.4px;font-size:22px;color:#000;font-weight:bold;letter-spacing:1.82px;">2029</div>
<div class="r" style="left:2629.0px;top:679.0px;width:136.0px;height:221.0px;background:#4cb3e8;"></div>
<div class="t" style="left:2669.8px;top:925.4px;font-size:22px;color:#000;font-weight:bold;letter-spacing:1.82px;">2030</div>
<div class="r" style="left:1717.0px;top:1263.0px;width:1088.0px;height:1.0px;background:#5e9cc2;"></div>
<div class="t" style="left:1675.5px;top:1253.9px;font-size:19.5px;color:#000;font-weight:bold;">-</div>
<div class="r" style="left:1717.0px;top:1227.0px;width:1088.0px;height:1.0px;background:#5e9cc2;"></div>
<div class="t" style="left:1614.8px;top:1217.5px;font-size:19.5px;color:#000;font-weight:bold;letter-spacing:1.29px;">500,000</div>
<div class="r" style="left:1717.0px;top:1190.0px;width:1088.0px;height:1.0px;background:#5e9cc2;"></div>
<div class="t" style="left:1596.6px;top:1181.1px;font-size:19.5px;color:#000;font-weight:bold;letter-spacing:1.21px;">1,000,000</div>
<div class="r" style="left:1717.0px;top:1154.0px;width:1088.0px;height:1.0px;background:#5e9cc2;"></div>
<div class="t" style="left:1596.6px;top:1144.7px;font-size:19.5px;color:#000;font-weight:bold;letter-spacing:1.21px;">1,500,000</div>
<div class="r" style="left:1717.0px;top:1117.0px;width:1088.0px;height:1.0px;background:#5e9cc2;"></div>
<div class="t" style="left:1596.6px;top:1108.4px;font-size:19.5px;color:#000;font-weight:bold;letter-spacing:1.21px;">2,000,000</div>
<div class="r" style="left:1717.0px;top:1081.0px;width:1088.0px;height:1.0px;background:#5e9cc2;"></div>
<div class="t" style="left:1596.6px;top:1072.0px;font-size:19.5px;color:#000;font-weight:bold;letter-spacing:1.21px;">2,500,000</div>
<div class="r" style="left:1717.0px;top:1045.0px;width:1088.0px;height:1.0px;background:#5e9cc2;"></div>
<div class="t" style="left:1596.6px;top:1035.6px;font-size:19.5px;color:#000;font-weight:bold;letter-spacing:1.21px;">3,000,000</div>
<div class="r" style="left:1717.0px;top:1263.0px;width:1.0px;height:8.0px;background:#5e9cc2;"></div>
<div class="r" style="left:1934.0px;top:1263.0px;width:1.0px;height:8.0px;background:#5e9cc2;"></div>
<div class="r" style="left:2152.0px;top:1263.0px;width:1.0px;height:8.0px;background:#5e9cc2;"></div>
<div class="r" style="left:2370.0px;top:1263.0px;width:1.0px;height:8.0px;background:#5e9cc2;"></div>
<div class="r" style="left:2587.0px;top:1263.0px;width:1.0px;height:8.0px;background:#5e9cc2;"></div>
<div class="r" style="left:1758.0px;top:1208.0px;width:136.0px;height:55.0px;background:#4cb3e8;"></div>
<div class="r" style="left:1758.0px;top:1207.0px;width:136.0px;height:1.0px;background:#ea7a6c;"></div>
<div class="t" style="left:1799.1px;top:1289.4px;font-size:22px;color:#000;font-weight:bold;letter-spacing:1.82px;">2026</div>
<div class="r" style="left:1976.0px;top:1182.0px;width:135.0px;height:81.0px;background:#4cb3e8;"></div>
<div class="r" style="left:1976.0px;top:1180.0px;width:135.0px;height:2.0px;background:#ea7a6c;"></div>
<div class="t" style="left:2016.7px;top:1289.4px;font-size:22px;color:#000;font-weight:bold;letter-spacing:1.82px;">2027</div>
<div class="r" style="left:2194.0px;top:1151.0px;width:135.0px;height:112.0px;background:#4cb3e8;"></div>
<div class="r" style="left:2194.0px;top:1150.0px;width:135.0px;height:1.0px;background:#ea7a6c;"></div>
<div class="t" style="left:2234.3px;top:1289.4px;font-size:22px;color:#000;font-weight:bold;letter-spacing:1.82px;">2028</div>
<div class="r" style="left:2411.0px;top:1121.0px;width:136.0px;height:142.0px;background:#4cb3e8;"></div>
<div class="r" style="left:2411.0px;top:1119.0px;width:136.0px;height:2.0px;background:#ea7a6c;"></div>
<div class="t" style="left:2451.9px;top:1289.4px;font-size:22px;color:#000;font-weight:bold;letter-spacing:1.82px;">2029</div>
<div class="r" style="left:2629.0px;top:1083.0px;width:135.0px;height:180.0px;background:#4cb3e8;"></div>
<div class="r" style="left:2629.0px;top:1081.0px;width:135.0px;height:2.0px;background:#ea7a6c;"></div>
<div class="t" style="left:2669.5px;top:1289.4px;font-size:22px;color:#000;font-weight:bold;letter-spacing:1.82px;">2030</div>
<div class="r" style="left:1846.0px;top:1015.0px;width:12.0px;height:12.0px;background:#4cb3e8;"></div>
<div class="t" style="left:1863.0px;top:1010.4px;font-size:22px;color:#000;font-weight:bold;letter-spacing:0.42px;">Visits (Tickets) Revenue</div>
<div class="r" style="left:2387.0px;top:1015.0px;width:12.0px;height:12.0px;background:#ea7a6c;"></div>
<div class="t" style="left:2405.0px;top:1010.4px;font-size:22px;color:#000;font-weight:bold;letter-spacing:0.62px;">Extra Income</div>
<div class="r" style="left:2861.0px;top:278.0px;width:31.0px;height:1392.0px;background:#141414;"></div>
<div class="r" style="left:2864px;top:280px;width:25px;height:1388px;border-radius:12px;background:#1c1c1c"></div>
<svg class="s" style="left:2868px;top:285px" width="16" height="12" viewBox="0 0 16 12"><path d="M8 1 L15 11 H1 Z" fill="#9a9a9a" stroke="#9a9a9a" stroke-linejoin="round" stroke-width="2"/></svg>
<div class="r" style="left:2870px;top:304px;width:12px;height:963px;border-radius:6px;background:#9f9f9f"></div>
<svg class="s" style="left:2868px;top:1652px" width="16" height="12" viewBox="0 0 16 12"><path d="M8 11 L15 1 H1 Z" fill="#9a9a9a" stroke="#9a9a9a" stroke-linejoin="round" stroke-width="2"/></svg>
<div class="r" style="left:47.0px;top:1665.0px;width:553.0px;height:17.0px;background:#fff;"></div>
<div class="r" style="left:11px;top:1670px;width:429px;height:48px;border-top-right-radius:8px;background:#0a0a0a"></div>
<div class="r" style="left:546px;top:1670px;width:2346px;height:48px;border-top-left-radius:8px;background:#0a0a0a"></div>
<div class="r" style="left:11.0px;top:1718.0px;width:2881.0px;height:1.0px;background:#2c2c2c;"></div>
<svg class="s" style="left:44px;top:1683px" width="14" height="20" viewBox="0 0 14 20"><path d="M11 2 L3 10 L11 18" stroke="#8a8a8a" stroke-width="1.6" fill="none"/></svg>
<svg class="s" style="left:92px;top:1683px" width="14" height="20" viewBox="0 0 14 20"><path d="M3 2 L11 10 L3 18" stroke="#ddd" stroke-width="1.6" fill="none"/></svg>
<div class="t" style="left:190.0px;top:1686.1px;font-size:20px;color:#fff;letter-spacing:0.28px;">Contents</div>
<div class="r" style="left:299px;top:1676px;width:128px;height:36px;border-radius:6px;background:#fff06a"></div>
<div class="t" style="left:314.1px;top:1686.1px;font-size:20px;color:#111;">Dashboard</div>
<div class="r" style="left:559px;top:1676px;width:158px;height:36px;border-radius:6px;background:#fff06a"></div>
<div class="t" style="left:568.5px;top:1686.1px;font-size:20px;color:#111;">COGS &amp; OPEX</div>
<div class="r" style="left:730px;top:1676px;width:89px;height:36px;border-radius:6px;background:#fff06a"></div>
<div class="t" style="left:743.9px;top:1686.1px;font-size:20px;color:#111;">Payroll</div>
<div class="r" style="left:832px;top:1676px;width:87px;height:36px;border-radius:6px;background:#fff06a"></div>
<div class="t" style="left:841.6px;top:1686.1px;font-size:20px;color:#111;">CAPEX</div>
<div class="r" style="left:932px;top:1676px;width:113px;height:36px;border-radius:6px;background:#fff06a"></div>
<div class="t" style="left:946.2px;top:1686.1px;font-size:20px;color:#111;">CapTable</div>
<div class="r" style="left:1058px;top:1676px;width:90px;height:36px;border-radius:6px;background:#fff06a"></div>
<div class="t" style="left:1071.9px;top:1686.1px;font-size:20px;color:#111;">Capital</div>
<div class="r" style="left:1161px;top:1676px;width:42px;height:36px;border-radius:6px;background:#4cb3e8"></div>
<div class="t" style="left:1172.6px;top:1686.1px;font-size:20px;color:#111;">IS</div>
<div class="r" style="left:1216px;top:1676px;width:48px;height:36px;border-radius:6px;background:#4cb3e8"></div>
<div class="t" style="left:1226.7px;top:1686.1px;font-size:20px;color:#111;">CF</div>
<div class="r" style="left:1277px;top:1676px;width:48px;height:36px;border-radius:6px;background:#4cb3e8"></div>
<div class="t" style="left:1287.7px;top:1686.1px;font-size:20px;color:#111;">BS</div>
<div class="r" style="left:1338px;top:1676px;width:115px;height:36px;border-radius:6px;background:#4cb3e8"></div>
<div class="t" style="left:1351.0px;top:1686.1px;font-size:20px;color:#111;">Scenarios</div>
<div class="r" style="left:1466px;top:1676px;width:115px;height:36px;border-radius:6px;background:#4cb3e8"></div>
<div class="t" style="left:1482.5px;top:1686.1px;font-size:20px;color:#111;">Valuation</div>
<div class="r" style="left:1594px;top:1676px;width:114px;height:36px;border-radius:6px;background:#4cb3e8"></div>
<div class="t" style="left:1608.2px;top:1686.1px;font-size:20px;color:#111;">Summary</div>
<div class="r" style="left:1721px;top:1676px;width:48px;height:36px;border-radius:6px;background:#4cb3e8"></div>
<div class="t" style="left:1731.7px;top:1686.1px;font-size:20px;color:#111;">BE</div>
<div class="r" style="left:1782px;top:1676px;width:72px;height:36px;border-radius:6px;background:#4cb3e8"></div>
<div class="t" style="left:1793.0px;top:1686.1px;font-size:20px;color:#111;">ROIC</div>
<div class="r" style="left:1867px;top:1676px;width:85px;height:36px;border-radius:6px;background:#4cb3e8"></div>
<div class="t" style="left:1880.0px;top:1686.1px;font-size:20px;color:#111;">Charts</div>
<div class="r" style="left:1965px;top:1676px;width:64px;height:36px;border-radius:6px;background:#4cb3e8"></div>
<div class="t" style="left:1975.9px;top:1686.1px;font-size:20px;color:#111;">KPIs</div>
<div class="r" style="left:2042px;top:1676px;width:30px;height:36px;border-radius:6px 0 0 6px;background:#4cb3e8"></div>
<div class="t" style="left:2054.0px;top:1686.1px;font-size:20px;color:#111;">Sc</div>
<div class="r" style="left:292.0px;top:1682.0px;width:1.0px;height:25.0px;background:#7a7a7a;"></div>
<div class="r" style="left:433.0px;top:1682.0px;width:1.0px;height:25.0px;background:#7a7a7a;"></div>
<div class="r" style="left:553.0px;top:1682.0px;width:1.0px;height:25.0px;background:#7a7a7a;"></div>
<div class="r" style="left:724.0px;top:1682.0px;width:1.0px;height:25.0px;background:#7a7a7a;"></div>
<div class="r" style="left:826.0px;top:1682.0px;width:1.0px;height:25.0px;background:#7a7a7a;"></div>
<div class="r" style="left:926.0px;top:1682.0px;width:1.0px;height:25.0px;background:#7a7a7a;"></div>
<div class="r" style="left:1052.0px;top:1682.0px;width:1.0px;height:25.0px;background:#7a7a7a;"></div>
<div class="r" style="left:1154.0px;top:1682.0px;width:1.0px;height:25.0px;background:#7a7a7a;"></div>
<div class="r" style="left:1209.0px;top:1682.0px;width:1.0px;height:25.0px;background:#7a7a7a;"></div>
<div class="r" style="left:1270.0px;top:1682.0px;width:1.0px;height:25.0px;background:#7a7a7a;"></div>
<div class="r" style="left:1331.0px;top:1682.0px;width:1.0px;height:25.0px;background:#7a7a7a;"></div>
<div class="r" style="left:1459.0px;top:1682.0px;width:1.0px;height:25.0px;background:#7a7a7a;"></div>
<div class="r" style="left:1587.0px;top:1682.0px;width:1.0px;height:25.0px;background:#7a7a7a;"></div>
<div class="r" style="left:1714.0px;top:1682.0px;width:1.0px;height:25.0px;background:#7a7a7a;"></div>
<div class="r" style="left:1775.0px;top:1682.0px;width:1.0px;height:25.0px;background:#7a7a7a;"></div>
<div class="r" style="left:1860.0px;top:1682.0px;width:1.0px;height:25.0px;background:#7a7a7a;"></div>
<div class="r" style="left:1959.0px;top:1682.0px;width:1.0px;height:25.0px;background:#7a7a7a;"></div>
<div class="r" style="left:2036.0px;top:1682.0px;width:1.0px;height:25.0px;background:#7a7a7a;"></div>
<div class="r" style="left:440px;top:1669px;width:106px;height:43px;border-radius:0 0 7px 7px;background:linear-gradient(#fff,#fffbe8)"></div>
<div class="t" style="left:452.5px;top:1680.6px;font-size:20.5px;color:#1a1a1a;letter-spacing:-0.18px;">Revenue</div>
<div class="r" style="left:452.0px;top:1705.0px;width:82.0px;height:3.0px;background:#1f7a3d;"></div>
<svg class="s" style="left:2086px;top:1690px" width="20" height="6" viewBox="0 0 20 6"><circle cx="3" cy="3" r="2.2" fill="#ddd"/><circle cx="10" cy="3" r="2.2" fill="#ddd"/><circle cx="17" cy="3" r="2.2" fill="#ddd"/></svg>
<svg class="s" style="left:2134px;top:1684px" width="18" height="18" viewBox="0 0 18 18"><path d="M9 1 V17 M1 9 H17" stroke="#ddd" stroke-width="1.6"/></svg>
<svg class="s" style="left:2188px;top:1683px" width="8" height="20" viewBox="0 0 8 20"><circle cx="4" cy="3" r="1.7" fill="#ddd"/><circle cx="4" cy="10" r="1.7" fill="#ddd"/><circle cx="4" cy="17" r="1.7" fill="#ddd"/></svg>
<div class="r" style="left:2217px;top:1679px;width:643px;height:27px;border-radius:13px;background:#141414"></div>
<svg class="s" style="left:2222px;top:1684px" width="14" height="16" viewBox="0 0 14 16"><path d="M12 1 L2 8 L12 15 Z" fill="#9a9a9a"/></svg>
<div class="r" style="left:2242px;top:1686px;width:544px;height:13px;border-radius:7px;background:#9f9f9f"></div>
<svg class="s" style="left:2840px;top:1684px" width="14" height="16" viewBox="0 0 14 16"><path d="M2 1 L12 8 L2 15 Z" fill="#9a9a9a"/></svg>
<div class="r" style="left:11.0px;top:1719.0px;width:2881.0px;height:32.0px;background:#141414;"></div>
<div class="t" style="left:27.0px;top:1729.0px;font-size:16.5px;color:#eee;letter-spacing:-1.42px;">Ready</div>
<svg class="s" style="left:98px;top:1724px" width="25" height="23" viewBox="0 0 25 23"><path d="M1.3 20 V2 H22.7 V9" stroke="#fff" stroke-width="1.7" fill="none"/><path d="M1.3 20 H9" stroke="#fff" stroke-width="1.7"/><path d="M3.2 4.2 H21" stroke="#fff" stroke-width="1.4"/><path d="M3.7 8.6 H8.2 M3.7 11.6 H8.2 M3.7 14.6 H8.2" stroke="#fff" stroke-width="1.5"/><circle cx="16" cy="14.6" r="5.9" stroke="#fff" stroke-width="1.7" fill="#141414"/><circle cx="16" cy="14.6" r="2.8" fill="#fff"/></svg>
<svg class="s" style="left:145px;top:1724px" width="24" height="24" viewBox="0 0 24 24"><circle cx="10.4" cy="3.6" r="2.4" stroke="#fff" stroke-width="1.5" fill="none"/><path d="M1.8 5.6 Q10.4 9.2 19 5.8" stroke="#fff" stroke-width="2.6" fill="none" stroke-linecap="round"/><path d="M10.4 7.5 V13.5 L7 21" stroke="#fff" stroke-width="2.6" fill="none" stroke-linecap="round" stroke-linejoin="round"/><path d="M13 12 L21.5 21 M21.5 12 L13 21" stroke="#fff" stroke-width="1.4"/></svg>
<div class="t" style="left:173.0px;top:1728.2px;font-size:17.5px;color:#fff;font-weight:bold;letter-spacing:-0.84px;">Accessibility: Investigate</div>
<div class="r" style="left:2446.0px;top:1719.0px;width:60.0px;height:32.0px;background:#262626;"></div>
<svg class="s" style="left:2464px;top:1723px" width="22" height="22" viewBox="0 0 22 22"><path d="M1 1 H21 V21 H1 Z M1 7.7 H21 M1 14.3 H21 M7.7 1 V21 M14.3 1 V21" stroke="#f4f4f4" stroke-width="1.8" fill="none"/></svg>
<svg class="s" style="left:2524px;top:1723px" width="22" height="22" viewBox="0 0 22 22"><rect x="1" y="1" width="20" height="20" stroke="#f4f4f4" stroke-width="1.8" fill="none"/><rect x="5" y="5" width="12" height="12" stroke="#f4f4f4" stroke-width="1.4" fill="none"/><path d="M8 8.5 H14 M8 11 H14 M8 13.5 H14" stroke="#f4f4f4" stroke-width="1.2"/></svg>
<svg class="s" style="left:2584px;top:1723px" width="22" height="22" viewBox="0 0 22 22"><rect x="1" y="1" width="20" height="20" stroke="#f4f4f4" stroke-width="1.8" fill="none"/><path d="M1 12 H13 V1 M7 1 V12" stroke="#f4f4f4" stroke-width="1.6" fill="none"/></svg>
<div class="r" style="left:2633.0px;top:1734.0px;width:12.0px;height:2.0px;background:#d0d0d0;"></div>
<div class="r" style="left:2653.0px;top:1734.0px;width:148.0px;height:2.0px;background:#bbbbbb;"></div>
<div class="r" style="left:2727.0px;top:1726.0px;width:9.0px;height:17.0px;background:#bdbdbd;"></div>
<svg class="s" style="left:2806px;top:1726px" width="16" height="16" viewBox="0 0 16 16"><path d="M8 1 V15 M1 8 H15" stroke="#e0e0e0" stroke-width="1.5"/></svg>
<div class="t" style="left:2840.0px;top:1727.6px;font-size:17px;color:#eee;letter-spacing:-1.49px;">120%</div>
</body></html>
